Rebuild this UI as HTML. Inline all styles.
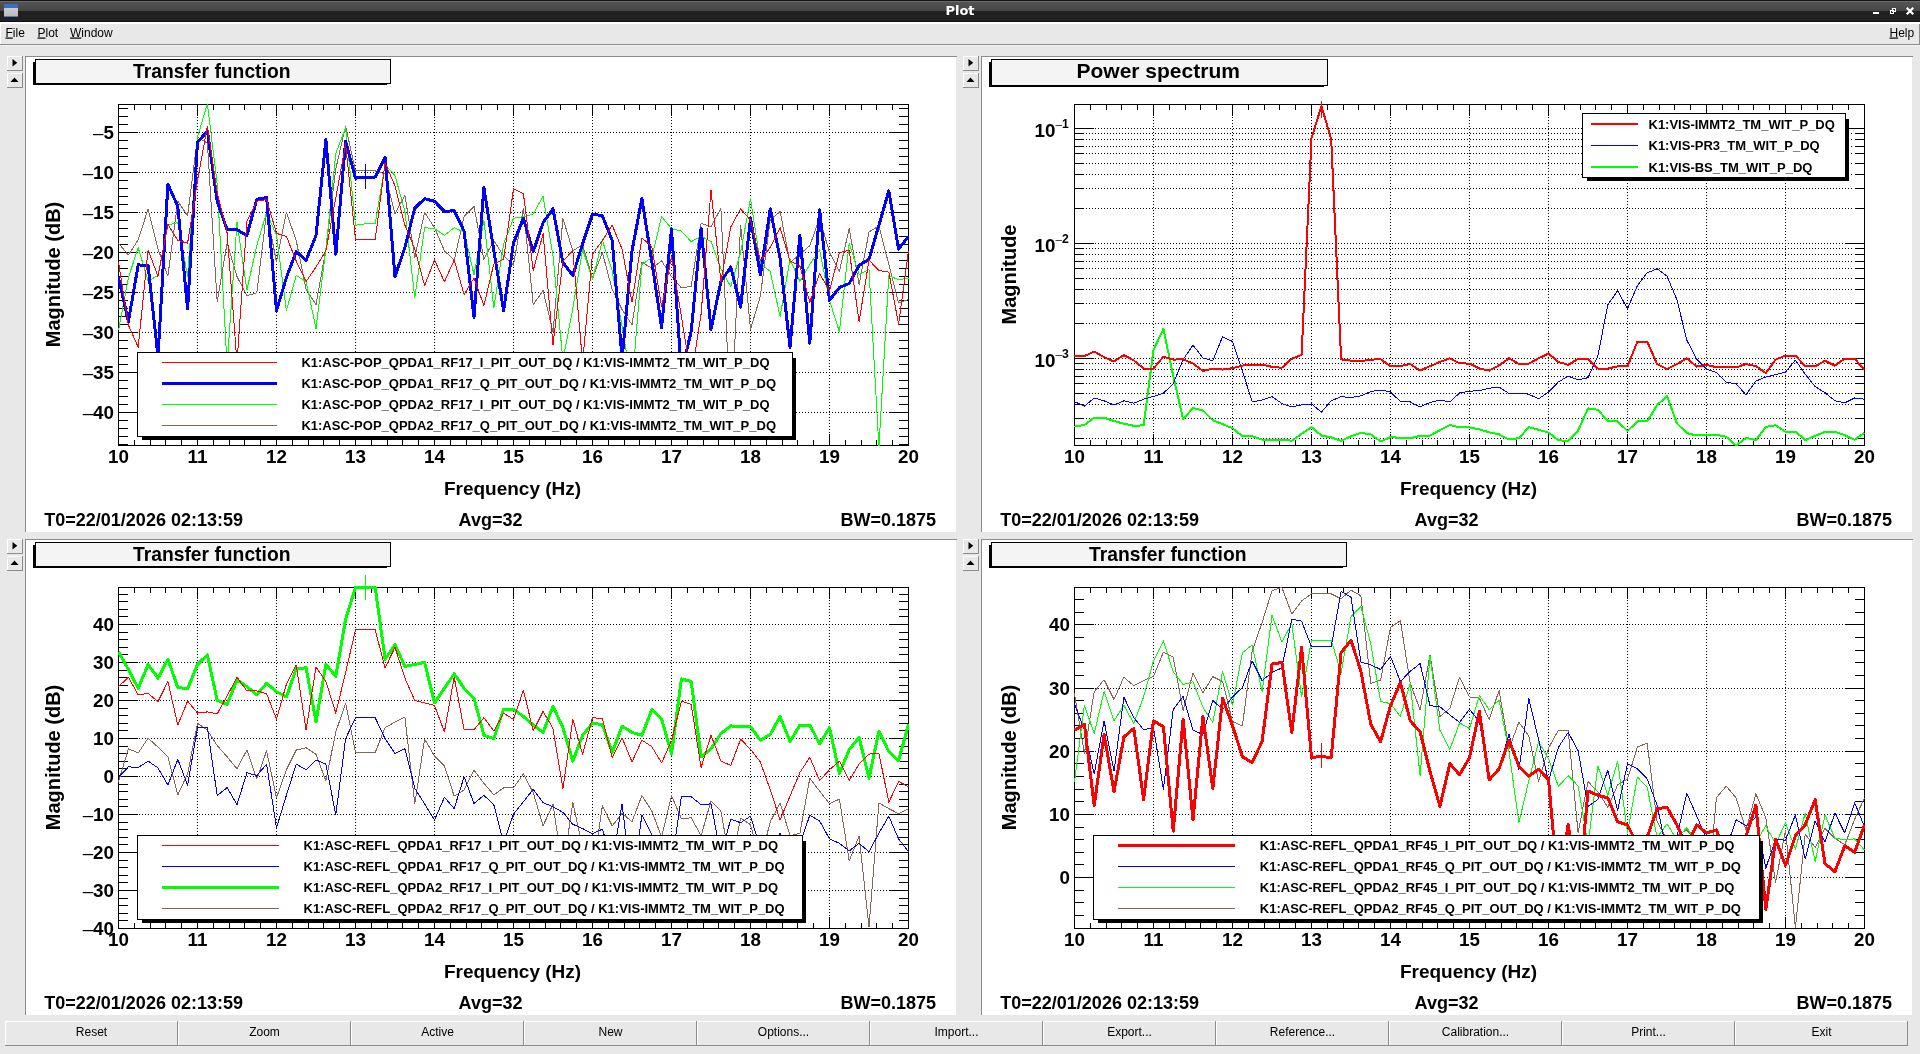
<!DOCTYPE html>
<html><head><meta charset="utf-8"><title>Plot</title><style>html,body{margin:0;padding:0;background:#e8e8e8;overflow:hidden}body{width:1920px;height:1054px}</style></head><body>
<svg width="1920" height="1054" viewBox="0 0 1920 1054" style="display:block;will-change:transform">
<defs><linearGradient id="tb" x1="0" y1="0" x2="0" y2="1"><stop offset="0" stop-color="#565656"/><stop offset="1" stop-color="#454545"/></linearGradient><linearGradient id="ic" x1="0" y1="0" x2="0" y2="1"><stop offset="0" stop-color="#d8d8d8"/><stop offset="1" stop-color="#b8b8b8"/></linearGradient></defs>
<rect width="1920" height="1054" fill="#e8e8e8"/>
<rect x="0" y="0" width="1920" height="22" fill="#212121"/>
<rect x="0" y="1" width="1920" height="10" fill="url(#tb)"/>
<rect x="0" y="0" width="1920" height="1" fill="#161616"/>
<rect x="0" y="1" width="1920" height="1" fill="#6a6a6a"/>
<rect x="0" y="21" width="1920" height="1" fill="#141414"/>
<rect x="0" y="22" width="1920" height="2" fill="#ffffff"/>
<rect x="4" y="4" width="14" height="13" fill="url(#ic)"/><rect x="4" y="4" width="14" height="4" fill="#3a6fc0"/><rect x="4" y="16" width="14" height="1" fill="#4a7fd0"/>
<text x="960" y="14.6" text-anchor="middle" font-family="'DejaVu Sans', sans-serif" font-weight="bold" font-size="13" fill="#fff">Plot</text>
<rect x="1873" y="12" width="6" height="2" fill="#fff"/>
<g fill="none" stroke="#fff" stroke-width="1"><rect x="1892.5" y="8.5" width="3" height="3"/><rect x="1890.5" y="10.5" width="3" height="3"/></g>
<path d="M1907.5 8.5 L1912.5 13.5 M1912.5 8.5 L1907.5 13.5" stroke="#fff" stroke-width="2.2" stroke-linecap="square"/>
<text x="5.5" y="36.5" font-family="'Liberation Sans', sans-serif" font-size="12" fill="#000" text-anchor="start"><tspan text-decoration="underline">F</tspan>ile</text>
<text x="37.5" y="36.5" font-family="'Liberation Sans', sans-serif" font-size="12" fill="#000" text-anchor="start"><tspan text-decoration="underline">P</tspan>lot</text>
<text x="70" y="36.5" font-family="'Liberation Sans', sans-serif" font-size="12" fill="#000" text-anchor="start"><tspan text-decoration="underline">W</tspan>indow</text>
<text x="1889.5" y="36.5" font-family="'Liberation Sans', sans-serif" font-size="12" fill="#000" text-anchor="start"><tspan text-decoration="underline">H</tspan>elp</text>
<rect x="0" y="44" width="1920" height="1" fill="#8c8c8c" />
<rect x="0" y="45" width="1920" height="1" fill="#f4f4f4" />
<rect x="1919" y="24" width="1" height="21" fill="#8c8c8c"/>
<rect x="0" y="22" width="1" height="22" fill="#ffffff"/>
<rect x="25" y="56" width="932" height="1" fill="#8c8c8c" />
<rect x="25" y="56" width="1" height="476" fill="#8c8c8c"/>
<rect x="26" y="57" width="930" height="475" fill="#fff"/>
<rect x="7" y="56" width="16" height="15" fill="#e8e8e8"/>
<rect x="7" y="56" width="16" height="1" fill="#fff" />
<rect x="7" y="56" width="1" height="15" fill="#fff"/>
<rect x="7" y="70" width="16" height="1" fill="#8c8c8c" />
<rect x="22" y="56" width="1" height="15" fill="#8c8c8c"/>
<path d="M12.5 59 L17.3 62.7 L12.5 66.5Z" fill="#000"/>
<rect x="7" y="73" width="16" height="15" fill="#e8e8e8"/>
<rect x="7" y="73" width="16" height="1" fill="#fff" />
<rect x="7" y="73" width="1" height="15" fill="#fff"/>
<rect x="7" y="87" width="16" height="1" fill="#8c8c8c" />
<rect x="22" y="73" width="1" height="15" fill="#8c8c8c"/>
<path d="M10.5 82 L14.5 77.5 L18.5 82Z" fill="#000"/>
<g shape-rendering="crispEdges"><rect x="33" y="62" width="354" height="23" fill="#000"/>
<rect x="35.5" y="59.5" width="355" height="24" fill="#f4f4f4" stroke="#000" stroke-width="1"/></g>
<text x="211.7" y="77.7" text-anchor="middle" font-family="'Liberation Sans', sans-serif" font-weight="bold" font-size="19.3" fill="#000">Transfer function</text>
<g shape-rendering="crispEdges">
<line x1="197.5" y1="117" x2="197.5" y2="433" stroke="#000" stroke-width="1" stroke-dasharray="1 2"/>
<line x1="276.5" y1="117" x2="276.5" y2="433" stroke="#000" stroke-width="1" stroke-dasharray="1 2"/>
<line x1="355.5" y1="117" x2="355.5" y2="433" stroke="#000" stroke-width="1" stroke-dasharray="1 2"/>
<line x1="434.5" y1="117" x2="434.5" y2="433" stroke="#000" stroke-width="1" stroke-dasharray="1 2"/>
<line x1="513.5" y1="117" x2="513.5" y2="433" stroke="#000" stroke-width="1" stroke-dasharray="1 2"/>
<line x1="592.5" y1="117" x2="592.5" y2="433" stroke="#000" stroke-width="1" stroke-dasharray="1 2"/>
<line x1="671.5" y1="117" x2="671.5" y2="433" stroke="#000" stroke-width="1" stroke-dasharray="1 2"/>
<line x1="750.5" y1="117" x2="750.5" y2="433" stroke="#000" stroke-width="1" stroke-dasharray="1 2"/>
<line x1="829.5" y1="117" x2="829.5" y2="433" stroke="#000" stroke-width="1" stroke-dasharray="1 2"/>
<rect x="134" y="104" width="1" height="6" fill="#000"/>
<rect x="134" y="440" width="1" height="6" fill="#000"/>
<rect x="150" y="104" width="1" height="6" fill="#000"/>
<rect x="150" y="440" width="1" height="6" fill="#000"/>
<rect x="165" y="104" width="1" height="6" fill="#000"/>
<rect x="165" y="440" width="1" height="6" fill="#000"/>
<rect x="181" y="104" width="1" height="6" fill="#000"/>
<rect x="181" y="440" width="1" height="6" fill="#000"/>
<rect x="197" y="104" width="1" height="12" fill="#000"/>
<rect x="197" y="434" width="1" height="12" fill="#000"/>
<rect x="213" y="104" width="1" height="6" fill="#000"/>
<rect x="213" y="440" width="1" height="6" fill="#000"/>
<rect x="229" y="104" width="1" height="6" fill="#000"/>
<rect x="229" y="440" width="1" height="6" fill="#000"/>
<rect x="244" y="104" width="1" height="6" fill="#000"/>
<rect x="244" y="440" width="1" height="6" fill="#000"/>
<rect x="260" y="104" width="1" height="6" fill="#000"/>
<rect x="260" y="440" width="1" height="6" fill="#000"/>
<rect x="276" y="104" width="1" height="12" fill="#000"/>
<rect x="276" y="434" width="1" height="12" fill="#000"/>
<rect x="292" y="104" width="1" height="6" fill="#000"/>
<rect x="292" y="440" width="1" height="6" fill="#000"/>
<rect x="308" y="104" width="1" height="6" fill="#000"/>
<rect x="308" y="440" width="1" height="6" fill="#000"/>
<rect x="323" y="104" width="1" height="6" fill="#000"/>
<rect x="323" y="440" width="1" height="6" fill="#000"/>
<rect x="339" y="104" width="1" height="6" fill="#000"/>
<rect x="339" y="440" width="1" height="6" fill="#000"/>
<rect x="355" y="104" width="1" height="12" fill="#000"/>
<rect x="355" y="434" width="1" height="12" fill="#000"/>
<rect x="371" y="104" width="1" height="6" fill="#000"/>
<rect x="371" y="440" width="1" height="6" fill="#000"/>
<rect x="387" y="104" width="1" height="6" fill="#000"/>
<rect x="387" y="440" width="1" height="6" fill="#000"/>
<rect x="402" y="104" width="1" height="6" fill="#000"/>
<rect x="402" y="440" width="1" height="6" fill="#000"/>
<rect x="418" y="104" width="1" height="6" fill="#000"/>
<rect x="418" y="440" width="1" height="6" fill="#000"/>
<rect x="434" y="104" width="1" height="12" fill="#000"/>
<rect x="434" y="434" width="1" height="12" fill="#000"/>
<rect x="450" y="104" width="1" height="6" fill="#000"/>
<rect x="450" y="440" width="1" height="6" fill="#000"/>
<rect x="466" y="104" width="1" height="6" fill="#000"/>
<rect x="466" y="440" width="1" height="6" fill="#000"/>
<rect x="481" y="104" width="1" height="6" fill="#000"/>
<rect x="481" y="440" width="1" height="6" fill="#000"/>
<rect x="497" y="104" width="1" height="6" fill="#000"/>
<rect x="497" y="440" width="1" height="6" fill="#000"/>
<rect x="513" y="104" width="1" height="12" fill="#000"/>
<rect x="513" y="434" width="1" height="12" fill="#000"/>
<rect x="529" y="104" width="1" height="6" fill="#000"/>
<rect x="529" y="440" width="1" height="6" fill="#000"/>
<rect x="545" y="104" width="1" height="6" fill="#000"/>
<rect x="545" y="440" width="1" height="6" fill="#000"/>
<rect x="560" y="104" width="1" height="6" fill="#000"/>
<rect x="560" y="440" width="1" height="6" fill="#000"/>
<rect x="576" y="104" width="1" height="6" fill="#000"/>
<rect x="576" y="440" width="1" height="6" fill="#000"/>
<rect x="592" y="104" width="1" height="12" fill="#000"/>
<rect x="592" y="434" width="1" height="12" fill="#000"/>
<rect x="608" y="104" width="1" height="6" fill="#000"/>
<rect x="608" y="440" width="1" height="6" fill="#000"/>
<rect x="624" y="104" width="1" height="6" fill="#000"/>
<rect x="624" y="440" width="1" height="6" fill="#000"/>
<rect x="639" y="104" width="1" height="6" fill="#000"/>
<rect x="639" y="440" width="1" height="6" fill="#000"/>
<rect x="655" y="104" width="1" height="6" fill="#000"/>
<rect x="655" y="440" width="1" height="6" fill="#000"/>
<rect x="671" y="104" width="1" height="12" fill="#000"/>
<rect x="671" y="434" width="1" height="12" fill="#000"/>
<rect x="687" y="104" width="1" height="6" fill="#000"/>
<rect x="687" y="440" width="1" height="6" fill="#000"/>
<rect x="703" y="104" width="1" height="6" fill="#000"/>
<rect x="703" y="440" width="1" height="6" fill="#000"/>
<rect x="718" y="104" width="1" height="6" fill="#000"/>
<rect x="718" y="440" width="1" height="6" fill="#000"/>
<rect x="734" y="104" width="1" height="6" fill="#000"/>
<rect x="734" y="440" width="1" height="6" fill="#000"/>
<rect x="750" y="104" width="1" height="12" fill="#000"/>
<rect x="750" y="434" width="1" height="12" fill="#000"/>
<rect x="766" y="104" width="1" height="6" fill="#000"/>
<rect x="766" y="440" width="1" height="6" fill="#000"/>
<rect x="782" y="104" width="1" height="6" fill="#000"/>
<rect x="782" y="440" width="1" height="6" fill="#000"/>
<rect x="797" y="104" width="1" height="6" fill="#000"/>
<rect x="797" y="440" width="1" height="6" fill="#000"/>
<rect x="813" y="104" width="1" height="6" fill="#000"/>
<rect x="813" y="440" width="1" height="6" fill="#000"/>
<rect x="829" y="104" width="1" height="12" fill="#000"/>
<rect x="829" y="434" width="1" height="12" fill="#000"/>
<rect x="845" y="104" width="1" height="6" fill="#000"/>
<rect x="845" y="440" width="1" height="6" fill="#000"/>
<rect x="861" y="104" width="1" height="6" fill="#000"/>
<rect x="861" y="440" width="1" height="6" fill="#000"/>
<rect x="876" y="104" width="1" height="6" fill="#000"/>
<rect x="876" y="440" width="1" height="6" fill="#000"/>
<rect x="892" y="104" width="1" height="6" fill="#000"/>
<rect x="892" y="440" width="1" height="6" fill="#000"/>
<rect x="118" y="444" width="10" height="1" fill="#000" />
<rect x="899" y="444" width="10" height="1" fill="#000" />
<rect x="118" y="436" width="10" height="1" fill="#000" />
<rect x="899" y="436" width="10" height="1" fill="#000" />
<rect x="118" y="428" width="10" height="1" fill="#000" />
<rect x="899" y="428" width="10" height="1" fill="#000" />
<rect x="118" y="420" width="10" height="1" fill="#000" />
<rect x="899" y="420" width="10" height="1" fill="#000" />
<rect x="118" y="412" width="20" height="1" fill="#000" />
<rect x="889" y="412" width="20" height="1" fill="#000" />
<line x1="139" y1="412.5" x2="888" y2="412.5" stroke="#000" stroke-width="1" stroke-dasharray="1 2"/>
</g><text x="114" y="419.2" text-anchor="end" font-family="'Liberation Sans', sans-serif" font-weight="bold" font-size="18.8" fill="#000"><tspan font-weight="normal">–</tspan>40</text><g shape-rendering="crispEdges">
<rect x="118" y="404" width="10" height="1" fill="#000" />
<rect x="899" y="404" width="10" height="1" fill="#000" />
<rect x="118" y="396" width="10" height="1" fill="#000" />
<rect x="899" y="396" width="10" height="1" fill="#000" />
<rect x="118" y="388" width="10" height="1" fill="#000" />
<rect x="899" y="388" width="10" height="1" fill="#000" />
<rect x="118" y="380" width="10" height="1" fill="#000" />
<rect x="899" y="380" width="10" height="1" fill="#000" />
<rect x="118" y="372" width="20" height="1" fill="#000" />
<rect x="889" y="372" width="20" height="1" fill="#000" />
<line x1="139" y1="372.5" x2="888" y2="372.5" stroke="#000" stroke-width="1" stroke-dasharray="1 2"/>
</g><text x="114" y="379.2" text-anchor="end" font-family="'Liberation Sans', sans-serif" font-weight="bold" font-size="18.8" fill="#000"><tspan font-weight="normal">–</tspan>35</text><g shape-rendering="crispEdges">
<rect x="118" y="364" width="10" height="1" fill="#000" />
<rect x="899" y="364" width="10" height="1" fill="#000" />
<rect x="118" y="356" width="10" height="1" fill="#000" />
<rect x="899" y="356" width="10" height="1" fill="#000" />
<rect x="118" y="348" width="10" height="1" fill="#000" />
<rect x="899" y="348" width="10" height="1" fill="#000" />
<rect x="118" y="340" width="10" height="1" fill="#000" />
<rect x="899" y="340" width="10" height="1" fill="#000" />
<rect x="118" y="332" width="20" height="1" fill="#000" />
<rect x="889" y="332" width="20" height="1" fill="#000" />
<line x1="139" y1="332.5" x2="888" y2="332.5" stroke="#000" stroke-width="1" stroke-dasharray="1 2"/>
</g><text x="114" y="339.2" text-anchor="end" font-family="'Liberation Sans', sans-serif" font-weight="bold" font-size="18.8" fill="#000"><tspan font-weight="normal">–</tspan>30</text><g shape-rendering="crispEdges">
<rect x="118" y="324" width="10" height="1" fill="#000" />
<rect x="899" y="324" width="10" height="1" fill="#000" />
<rect x="118" y="316" width="10" height="1" fill="#000" />
<rect x="899" y="316" width="10" height="1" fill="#000" />
<rect x="118" y="308" width="10" height="1" fill="#000" />
<rect x="899" y="308" width="10" height="1" fill="#000" />
<rect x="118" y="300" width="10" height="1" fill="#000" />
<rect x="899" y="300" width="10" height="1" fill="#000" />
<rect x="118" y="292" width="20" height="1" fill="#000" />
<rect x="889" y="292" width="20" height="1" fill="#000" />
<line x1="139" y1="292.5" x2="888" y2="292.5" stroke="#000" stroke-width="1" stroke-dasharray="1 2"/>
</g><text x="114" y="299.2" text-anchor="end" font-family="'Liberation Sans', sans-serif" font-weight="bold" font-size="18.8" fill="#000"><tspan font-weight="normal">–</tspan>25</text><g shape-rendering="crispEdges">
<rect x="118" y="284" width="10" height="1" fill="#000" />
<rect x="899" y="284" width="10" height="1" fill="#000" />
<rect x="118" y="276" width="10" height="1" fill="#000" />
<rect x="899" y="276" width="10" height="1" fill="#000" />
<rect x="118" y="268" width="10" height="1" fill="#000" />
<rect x="899" y="268" width="10" height="1" fill="#000" />
<rect x="118" y="260" width="10" height="1" fill="#000" />
<rect x="899" y="260" width="10" height="1" fill="#000" />
<rect x="118" y="252" width="20" height="1" fill="#000" />
<rect x="889" y="252" width="20" height="1" fill="#000" />
<line x1="139" y1="252.5" x2="888" y2="252.5" stroke="#000" stroke-width="1" stroke-dasharray="1 2"/>
</g><text x="114" y="259.2" text-anchor="end" font-family="'Liberation Sans', sans-serif" font-weight="bold" font-size="18.8" fill="#000"><tspan font-weight="normal">–</tspan>20</text><g shape-rendering="crispEdges">
<rect x="118" y="244" width="10" height="1" fill="#000" />
<rect x="899" y="244" width="10" height="1" fill="#000" />
<rect x="118" y="236" width="10" height="1" fill="#000" />
<rect x="899" y="236" width="10" height="1" fill="#000" />
<rect x="118" y="228" width="10" height="1" fill="#000" />
<rect x="899" y="228" width="10" height="1" fill="#000" />
<rect x="118" y="220" width="10" height="1" fill="#000" />
<rect x="899" y="220" width="10" height="1" fill="#000" />
<rect x="118" y="212" width="20" height="1" fill="#000" />
<rect x="889" y="212" width="20" height="1" fill="#000" />
<line x1="139" y1="212.5" x2="888" y2="212.5" stroke="#000" stroke-width="1" stroke-dasharray="1 2"/>
</g><text x="114" y="219.2" text-anchor="end" font-family="'Liberation Sans', sans-serif" font-weight="bold" font-size="18.8" fill="#000"><tspan font-weight="normal">–</tspan>15</text><g shape-rendering="crispEdges">
<rect x="118" y="204" width="10" height="1" fill="#000" />
<rect x="899" y="204" width="10" height="1" fill="#000" />
<rect x="118" y="196" width="10" height="1" fill="#000" />
<rect x="899" y="196" width="10" height="1" fill="#000" />
<rect x="118" y="188" width="10" height="1" fill="#000" />
<rect x="899" y="188" width="10" height="1" fill="#000" />
<rect x="118" y="180" width="10" height="1" fill="#000" />
<rect x="899" y="180" width="10" height="1" fill="#000" />
<rect x="118" y="172" width="20" height="1" fill="#000" />
<rect x="889" y="172" width="20" height="1" fill="#000" />
<line x1="139" y1="172.5" x2="888" y2="172.5" stroke="#000" stroke-width="1" stroke-dasharray="1 2"/>
</g><text x="114" y="179.2" text-anchor="end" font-family="'Liberation Sans', sans-serif" font-weight="bold" font-size="18.8" fill="#000"><tspan font-weight="normal">–</tspan>10</text><g shape-rendering="crispEdges">
<rect x="118" y="164" width="10" height="1" fill="#000" />
<rect x="899" y="164" width="10" height="1" fill="#000" />
<rect x="118" y="156" width="10" height="1" fill="#000" />
<rect x="899" y="156" width="10" height="1" fill="#000" />
<rect x="118" y="148" width="10" height="1" fill="#000" />
<rect x="899" y="148" width="10" height="1" fill="#000" />
<rect x="118" y="140" width="10" height="1" fill="#000" />
<rect x="899" y="140" width="10" height="1" fill="#000" />
<rect x="118" y="132" width="20" height="1" fill="#000" />
<rect x="889" y="132" width="20" height="1" fill="#000" />
<line x1="139" y1="132.5" x2="888" y2="132.5" stroke="#000" stroke-width="1" stroke-dasharray="1 2"/>
</g><text x="114" y="139.2" text-anchor="end" font-family="'Liberation Sans', sans-serif" font-weight="bold" font-size="18.8" fill="#000"><tspan font-weight="normal">–</tspan>5</text><g shape-rendering="crispEdges">
<rect x="118" y="124" width="10" height="1" fill="#000" />
<rect x="899" y="124" width="10" height="1" fill="#000" />
<rect x="118" y="116" width="10" height="1" fill="#000" />
<rect x="899" y="116" width="10" height="1" fill="#000" />
<rect x="118" y="108" width="10" height="1" fill="#000" />
<rect x="899" y="108" width="10" height="1" fill="#000" />
</g>
<g shape-rendering="crispEdges">
<rect x="118" y="104" width="791" height="1" fill="#000" />
<rect x="118" y="445" width="791" height="1" fill="#000" />
<rect x="118" y="104" width="1" height="342" fill="#000"/>
<rect x="908" y="104" width="1" height="342" fill="#000"/>
</g>
<clipPath id="cp0"><rect x="118" y="104" width="791" height="342"/></clipPath>
<g clip-path="url(#cp0)" shape-rendering="crispEdges" fill="none" stroke-linejoin="round">
<polyline points="118.5,243.1 128.4,255.0 138.2,239.7 148.1,208.9 158.0,249.1 167.9,276.0 177.8,201.3 187.6,215.8 197.5,137.2 207.4,143.2 217.2,302.1 227.1,243.1 237.0,276.5 246.9,295.8 256.8,292.7 266.6,212.4 276.5,261.9 286.4,212.4 296.2,240.5 306.1,289.3 316.0,304.7 325.9,249.1 335.8,168.8 345.6,126.1 355.5,170.9 365.4,170.9 375.2,170.9 385.1,173.9 395.0,213.7 404.9,195.1 414.8,257.6 424.6,212.4 434.5,227.7 444.4,250.8 454.2,260.2 464.1,216.6 474.0,206.4 483.9,259.3 493.8,240.5 503.6,255.9 513.5,265.0 523.4,208.1 533.2,304.7 543.1,290.5 553.0,332.2 562.9,218.3 572.8,250.8 582.6,244.8 592.5,278.1 602.4,252.5 612.2,289.7 622.1,309.7 632.0,324.7 641.9,262.0 651.8,268.3 661.6,261.0 671.5,276.5 681.4,287.8 691.2,286.5 701.1,223.4 711.0,226.9 720.9,208.1 730.8,424.5 740.6,225.2 750.5,329.4 760.4,296.1 770.2,220.0 780.1,211.5 790.0,262.7 799.9,254.2 809.8,245.7 819.6,218.3 829.5,252.5 839.4,271.3 849.2,228.6 859.1,284.5 869.0,232.0 878.9,226.0 888.8,264.4 898.6,302.9 908.5,299.5" stroke="#87665a" stroke-width="1"/>
<polyline points="118.5,330.5 128.4,277.5 138.2,247.7 148.1,281.0 158.0,275.5 167.9,225.2 177.8,222.6 187.6,276.5 197.5,137.2 207.4,103.5 217.2,184.2 227.1,365.5 237.0,222.1 246.9,290.1 256.8,245.5 266.6,212.4 276.5,235.4 286.4,310.6 296.2,275.5 306.1,281.5 316.0,328.6 325.9,249.1 335.8,153.4 345.6,127.8 355.5,225.2 365.4,223.8 375.2,223.8 385.1,164.5 395.0,175.6 404.9,211.5 414.8,297.9 424.6,227.7 434.5,228.6 444.4,235.4 454.2,227.7 464.1,232.0 474.0,274.7 483.9,220.0 493.8,308.0 503.6,243.9 513.5,218.3 523.4,216.6 533.2,214.1 543.1,196.1 553.0,255.5 562.9,360.5 572.8,308.5 582.6,249.1 592.5,279.5 602.4,240.5 612.2,271.0 622.1,326.5 632.0,385.5 641.9,264.4 651.8,257.6 661.6,216.6 671.5,228.6 681.4,231.1 691.2,241.7 701.1,236.3 711.0,241.4 720.9,268.7 730.8,286.7 740.6,252.5 750.5,198.7 760.4,263.6 770.2,271.3 780.1,316.6 790.0,259.3 799.9,281.5 809.8,264.4 819.6,249.9 829.5,300.4 839.4,332.0 849.2,243.1 859.1,274.7 869.0,269.6 878.9,447.5 888.8,275.5 898.6,279.8 908.5,278.1" stroke="#00ff00" stroke-width="1"/>
<polyline points="118.5,277.5 128.4,321.5 138.2,264.8 148.1,265.8 158.0,356.5 167.9,184.2 177.8,206.4 187.6,308.9 197.5,142.3 207.4,130.9 217.2,201.3 227.1,229.8 237.0,229.8 246.9,235.4 256.8,199.2 266.6,197.5 276.5,310.5 286.4,277.5 296.2,251.6 306.1,260.2 316.0,235.4 325.9,139.8 335.8,254.2 345.6,141.5 355.5,178.2 365.4,177.0 375.2,177.0 385.1,157.7 395.0,276.5 404.9,247.4 414.8,208.1 424.6,198.7 434.5,201.3 444.4,211.5 454.2,210.6 464.1,231.1 474.0,317.2 483.9,187.6 493.8,250.5 503.6,310.5 513.5,243.1 523.4,218.3 533.2,251.6 543.1,222.6 553.0,208.9 562.9,262.5 572.8,275.5 582.6,243.9 592.5,214.1 602.4,215.8 612.2,240.5 622.1,358.5 632.0,250.8 641.9,198.7 651.8,261.5 661.6,327.5 671.5,229.0 681.4,372.5 691.2,331.5 701.1,228.5 711.0,329.4 720.9,281.5 730.8,267.0 740.6,307.2 750.5,218.3 760.4,275.0 770.2,208.9 780.1,258.5 790.0,347.3 799.9,235.4 809.8,343.1 819.6,209.8 829.5,300.4 839.4,287.6 849.2,283.5 859.1,265.3 869.0,259.3 878.9,225.2 888.8,191.0 898.6,249.1 908.5,236.3" stroke="#0000ff" stroke-width="3"/>
<polyline points="118.5,262.0 128.4,325.1 138.2,347.3 148.1,249.9 158.0,276.4 167.9,224.3 177.8,240.5 187.6,243.1 197.5,180.8 207.4,126.1 217.2,192.7 227.1,232.8 237.0,362.5 246.9,220.9 256.8,201.3 266.6,199.5 276.5,233.4 286.4,236.3 296.2,261.0 306.1,281.5 316.0,267.0 325.9,250.8 335.8,197.8 345.6,144.0 355.5,239.7 365.4,239.7 375.2,239.7 385.1,162.8 395.0,185.9 404.9,225.2 414.8,249.1 424.6,285.5 434.5,260.0 444.4,281.8 454.2,260.0 464.1,294.7 474.0,278.0 483.9,305.5 493.8,264.0 503.6,259.3 513.5,189.0 523.4,193.6 533.2,270.5 543.1,233.7 553.0,344.7 562.9,261.0 572.8,250.8 582.6,362.5 592.5,254.2 602.4,240.5 612.2,225.2 622.1,249.1 632.0,302.2 641.9,238.0 651.8,246.5 661.6,306.8 671.5,257.0 681.4,316.5 691.2,377.5 701.1,313.9 711.0,190.2 720.9,281.5 730.8,226.9 740.6,208.9 750.5,220.0 760.4,261.0 770.2,247.4 780.1,227.7 790.0,261.0 799.9,266.1 809.8,302.1 819.6,273.5 829.5,291.0 839.4,252.5 849.2,250.4 859.1,321.7 869.0,260.2 878.9,270.4 888.8,272.1 898.6,324.3 908.5,250.8" stroke="#ff0000" stroke-width="1"/>
</g>
<rect x="365" y="164" width="1" height="25" fill="#0000ff" shape-rendering="crispEdges"/>
<text x="118.5" y="463.2" text-anchor="middle" font-family="'Liberation Sans', sans-serif" font-weight="bold" font-size="18.8" fill="#000">10</text>
<text x="197.5" y="463.2" text-anchor="middle" font-family="'Liberation Sans', sans-serif" font-weight="bold" font-size="18.8" fill="#000">11</text>
<text x="276.5" y="463.2" text-anchor="middle" font-family="'Liberation Sans', sans-serif" font-weight="bold" font-size="18.8" fill="#000">12</text>
<text x="355.5" y="463.2" text-anchor="middle" font-family="'Liberation Sans', sans-serif" font-weight="bold" font-size="18.8" fill="#000">13</text>
<text x="434.5" y="463.2" text-anchor="middle" font-family="'Liberation Sans', sans-serif" font-weight="bold" font-size="18.8" fill="#000">14</text>
<text x="513.5" y="463.2" text-anchor="middle" font-family="'Liberation Sans', sans-serif" font-weight="bold" font-size="18.8" fill="#000">15</text>
<text x="592.5" y="463.2" text-anchor="middle" font-family="'Liberation Sans', sans-serif" font-weight="bold" font-size="18.8" fill="#000">16</text>
<text x="671.5" y="463.2" text-anchor="middle" font-family="'Liberation Sans', sans-serif" font-weight="bold" font-size="18.8" fill="#000">17</text>
<text x="750.5" y="463.2" text-anchor="middle" font-family="'Liberation Sans', sans-serif" font-weight="bold" font-size="18.8" fill="#000">18</text>
<text x="829.5" y="463.2" text-anchor="middle" font-family="'Liberation Sans', sans-serif" font-weight="bold" font-size="18.8" fill="#000">19</text>
<text x="908.5" y="463.2" text-anchor="middle" font-family="'Liberation Sans', sans-serif" font-weight="bold" font-size="18.8" fill="#000">20</text>
<text x="512.5" y="495" text-anchor="middle" font-family="'Liberation Sans', sans-serif" font-weight="bold" font-size="19" fill="#000">Frequency (Hz)</text>
<text transform="translate(60,274.5) rotate(-90)" text-anchor="middle" font-family="'Liberation Sans', sans-serif" font-weight="bold" font-size="20" fill="#000">Magnitude (dB)</text>
<text x="44.3" y="525.5" font-family="'Liberation Sans', sans-serif" font-weight="bold" font-size="18" fill="#000">T0=22/01/2026 02:13:59</text>
<text x="490.5" y="525.5" text-anchor="middle" font-family="'Liberation Sans', sans-serif" font-weight="bold" font-size="18" fill="#000">Avg=32</text>
<text x="936" y="525.5" text-anchor="end" font-family="'Liberation Sans', sans-serif" font-weight="bold" font-size="18" fill="#000">BW=0.1875</text>
<g shape-rendering="crispEdges">
<rect x="142" y="358" width="654" height="82" fill="#000"/>
<rect x="137.5" y="352.5" width="655" height="84" fill="#fff" stroke="#000"/>
<rect x="162" y="362" width="115" height="1" fill="#ff0000"/>
<rect x="162" y="382" width="115" height="3" fill="#0000ff"/>
<rect x="162" y="404" width="115" height="1" fill="#00ff00"/>
<rect x="162" y="425" width="115" height="1" fill="#87665a"/>
</g>
<text x="301.4" y="366.6" font-family="'Liberation Sans', sans-serif" font-weight="bold" font-size="13" fill="#000">K1:ASC-POP_QPDA1_RF17_I_PIT_OUT_DQ / K1:VIS-IMMT2_TM_WIT_P_DQ</text>
<text x="301.4" y="387.6" font-family="'Liberation Sans', sans-serif" font-weight="bold" font-size="13" fill="#000">K1:ASC-POP_QPDA1_RF17_Q_PIT_OUT_DQ / K1:VIS-IMMT2_TM_WIT_P_DQ</text>
<text x="301.4" y="408.6" font-family="'Liberation Sans', sans-serif" font-weight="bold" font-size="13" fill="#000">K1:ASC-POP_QPDA2_RF17_I_PIT_OUT_DQ / K1:VIS-IMMT2_TM_WIT_P_DQ</text>
<text x="301.4" y="429.6" font-family="'Liberation Sans', sans-serif" font-weight="bold" font-size="13" fill="#000">K1:ASC-POP_QPDA2_RF17_Q_PIT_OUT_DQ / K1:VIS-IMMT2_TM_WIT_P_DQ</text>
<rect x="981" y="56" width="932" height="1" fill="#8c8c8c" />
<rect x="981" y="56" width="1" height="476" fill="#8c8c8c"/>
<rect x="982" y="57" width="930" height="475" fill="#fff"/>
<rect x="963" y="56" width="16" height="15" fill="#e8e8e8"/>
<rect x="963" y="56" width="16" height="1" fill="#fff" />
<rect x="963" y="56" width="1" height="15" fill="#fff"/>
<rect x="963" y="70" width="16" height="1" fill="#8c8c8c" />
<rect x="978" y="56" width="1" height="15" fill="#8c8c8c"/>
<path d="M968.5 59 L973.3 62.7 L968.5 66.5Z" fill="#000"/>
<rect x="963" y="73" width="16" height="15" fill="#e8e8e8"/>
<rect x="963" y="73" width="16" height="1" fill="#fff" />
<rect x="963" y="73" width="1" height="15" fill="#fff"/>
<rect x="963" y="87" width="16" height="1" fill="#8c8c8c" />
<rect x="978" y="73" width="1" height="15" fill="#8c8c8c"/>
<path d="M966.5 82 L970.5 77.5 L974.5 82Z" fill="#000"/>
<g shape-rendering="crispEdges"><rect x="989" y="62" width="335" height="25" fill="#000"/>
<rect x="991.5" y="59.5" width="336" height="26" fill="#f4f4f4" stroke="#000" stroke-width="1"/></g>
<text x="1158.2" y="77.7" text-anchor="middle" font-family="'Liberation Sans', sans-serif" font-weight="bold" font-size="21" fill="#000">Power spectrum</text>
<g shape-rendering="crispEdges">
<line x1="1153.5" y1="117" x2="1153.5" y2="433" stroke="#000" stroke-width="1" stroke-dasharray="1 2"/>
<line x1="1232.5" y1="117" x2="1232.5" y2="433" stroke="#000" stroke-width="1" stroke-dasharray="1 2"/>
<line x1="1311.5" y1="117" x2="1311.5" y2="433" stroke="#000" stroke-width="1" stroke-dasharray="1 2"/>
<line x1="1390.5" y1="117" x2="1390.5" y2="433" stroke="#000" stroke-width="1" stroke-dasharray="1 2"/>
<line x1="1469.5" y1="117" x2="1469.5" y2="433" stroke="#000" stroke-width="1" stroke-dasharray="1 2"/>
<line x1="1548.5" y1="117" x2="1548.5" y2="433" stroke="#000" stroke-width="1" stroke-dasharray="1 2"/>
<line x1="1627.5" y1="117" x2="1627.5" y2="433" stroke="#000" stroke-width="1" stroke-dasharray="1 2"/>
<line x1="1706.5" y1="117" x2="1706.5" y2="433" stroke="#000" stroke-width="1" stroke-dasharray="1 2"/>
<line x1="1785.5" y1="117" x2="1785.5" y2="433" stroke="#000" stroke-width="1" stroke-dasharray="1 2"/>
<rect x="1090" y="104" width="1" height="6" fill="#000"/>
<rect x="1090" y="440" width="1" height="6" fill="#000"/>
<rect x="1106" y="104" width="1" height="6" fill="#000"/>
<rect x="1106" y="440" width="1" height="6" fill="#000"/>
<rect x="1121" y="104" width="1" height="6" fill="#000"/>
<rect x="1121" y="440" width="1" height="6" fill="#000"/>
<rect x="1137" y="104" width="1" height="6" fill="#000"/>
<rect x="1137" y="440" width="1" height="6" fill="#000"/>
<rect x="1153" y="104" width="1" height="12" fill="#000"/>
<rect x="1153" y="434" width="1" height="12" fill="#000"/>
<rect x="1169" y="104" width="1" height="6" fill="#000"/>
<rect x="1169" y="440" width="1" height="6" fill="#000"/>
<rect x="1185" y="104" width="1" height="6" fill="#000"/>
<rect x="1185" y="440" width="1" height="6" fill="#000"/>
<rect x="1200" y="104" width="1" height="6" fill="#000"/>
<rect x="1200" y="440" width="1" height="6" fill="#000"/>
<rect x="1216" y="104" width="1" height="6" fill="#000"/>
<rect x="1216" y="440" width="1" height="6" fill="#000"/>
<rect x="1232" y="104" width="1" height="12" fill="#000"/>
<rect x="1232" y="434" width="1" height="12" fill="#000"/>
<rect x="1248" y="104" width="1" height="6" fill="#000"/>
<rect x="1248" y="440" width="1" height="6" fill="#000"/>
<rect x="1264" y="104" width="1" height="6" fill="#000"/>
<rect x="1264" y="440" width="1" height="6" fill="#000"/>
<rect x="1279" y="104" width="1" height="6" fill="#000"/>
<rect x="1279" y="440" width="1" height="6" fill="#000"/>
<rect x="1295" y="104" width="1" height="6" fill="#000"/>
<rect x="1295" y="440" width="1" height="6" fill="#000"/>
<rect x="1311" y="104" width="1" height="12" fill="#000"/>
<rect x="1311" y="434" width="1" height="12" fill="#000"/>
<rect x="1327" y="104" width="1" height="6" fill="#000"/>
<rect x="1327" y="440" width="1" height="6" fill="#000"/>
<rect x="1343" y="104" width="1" height="6" fill="#000"/>
<rect x="1343" y="440" width="1" height="6" fill="#000"/>
<rect x="1358" y="104" width="1" height="6" fill="#000"/>
<rect x="1358" y="440" width="1" height="6" fill="#000"/>
<rect x="1374" y="104" width="1" height="6" fill="#000"/>
<rect x="1374" y="440" width="1" height="6" fill="#000"/>
<rect x="1390" y="104" width="1" height="12" fill="#000"/>
<rect x="1390" y="434" width="1" height="12" fill="#000"/>
<rect x="1406" y="104" width="1" height="6" fill="#000"/>
<rect x="1406" y="440" width="1" height="6" fill="#000"/>
<rect x="1422" y="104" width="1" height="6" fill="#000"/>
<rect x="1422" y="440" width="1" height="6" fill="#000"/>
<rect x="1437" y="104" width="1" height="6" fill="#000"/>
<rect x="1437" y="440" width="1" height="6" fill="#000"/>
<rect x="1453" y="104" width="1" height="6" fill="#000"/>
<rect x="1453" y="440" width="1" height="6" fill="#000"/>
<rect x="1469" y="104" width="1" height="12" fill="#000"/>
<rect x="1469" y="434" width="1" height="12" fill="#000"/>
<rect x="1485" y="104" width="1" height="6" fill="#000"/>
<rect x="1485" y="440" width="1" height="6" fill="#000"/>
<rect x="1501" y="104" width="1" height="6" fill="#000"/>
<rect x="1501" y="440" width="1" height="6" fill="#000"/>
<rect x="1516" y="104" width="1" height="6" fill="#000"/>
<rect x="1516" y="440" width="1" height="6" fill="#000"/>
<rect x="1532" y="104" width="1" height="6" fill="#000"/>
<rect x="1532" y="440" width="1" height="6" fill="#000"/>
<rect x="1548" y="104" width="1" height="12" fill="#000"/>
<rect x="1548" y="434" width="1" height="12" fill="#000"/>
<rect x="1564" y="104" width="1" height="6" fill="#000"/>
<rect x="1564" y="440" width="1" height="6" fill="#000"/>
<rect x="1580" y="104" width="1" height="6" fill="#000"/>
<rect x="1580" y="440" width="1" height="6" fill="#000"/>
<rect x="1595" y="104" width="1" height="6" fill="#000"/>
<rect x="1595" y="440" width="1" height="6" fill="#000"/>
<rect x="1611" y="104" width="1" height="6" fill="#000"/>
<rect x="1611" y="440" width="1" height="6" fill="#000"/>
<rect x="1627" y="104" width="1" height="12" fill="#000"/>
<rect x="1627" y="434" width="1" height="12" fill="#000"/>
<rect x="1643" y="104" width="1" height="6" fill="#000"/>
<rect x="1643" y="440" width="1" height="6" fill="#000"/>
<rect x="1659" y="104" width="1" height="6" fill="#000"/>
<rect x="1659" y="440" width="1" height="6" fill="#000"/>
<rect x="1674" y="104" width="1" height="6" fill="#000"/>
<rect x="1674" y="440" width="1" height="6" fill="#000"/>
<rect x="1690" y="104" width="1" height="6" fill="#000"/>
<rect x="1690" y="440" width="1" height="6" fill="#000"/>
<rect x="1706" y="104" width="1" height="12" fill="#000"/>
<rect x="1706" y="434" width="1" height="12" fill="#000"/>
<rect x="1722" y="104" width="1" height="6" fill="#000"/>
<rect x="1722" y="440" width="1" height="6" fill="#000"/>
<rect x="1738" y="104" width="1" height="6" fill="#000"/>
<rect x="1738" y="440" width="1" height="6" fill="#000"/>
<rect x="1753" y="104" width="1" height="6" fill="#000"/>
<rect x="1753" y="440" width="1" height="6" fill="#000"/>
<rect x="1769" y="104" width="1" height="6" fill="#000"/>
<rect x="1769" y="440" width="1" height="6" fill="#000"/>
<rect x="1785" y="104" width="1" height="12" fill="#000"/>
<rect x="1785" y="434" width="1" height="12" fill="#000"/>
<rect x="1801" y="104" width="1" height="6" fill="#000"/>
<rect x="1801" y="440" width="1" height="6" fill="#000"/>
<rect x="1817" y="104" width="1" height="6" fill="#000"/>
<rect x="1817" y="440" width="1" height="6" fill="#000"/>
<rect x="1832" y="104" width="1" height="6" fill="#000"/>
<rect x="1832" y="440" width="1" height="6" fill="#000"/>
<rect x="1848" y="104" width="1" height="6" fill="#000"/>
<rect x="1848" y="440" width="1" height="6" fill="#000"/>
<rect x="1074" y="438" width="10" height="1" fill="#000" />
<rect x="1855" y="438" width="10" height="1" fill="#000" />
<line x1="1086" y1="438.5" x2="1854" y2="438.5" stroke="#000" stroke-width="1" stroke-dasharray="1 2"/>
<rect x="1074" y="418" width="10" height="1" fill="#000" />
<rect x="1855" y="418" width="10" height="1" fill="#000" />
<line x1="1086" y1="418.5" x2="1854" y2="418.5" stroke="#000" stroke-width="1" stroke-dasharray="1 2"/>
<rect x="1074" y="404" width="10" height="1" fill="#000" />
<rect x="1855" y="404" width="10" height="1" fill="#000" />
<line x1="1086" y1="404.5" x2="1854" y2="404.5" stroke="#000" stroke-width="1" stroke-dasharray="1 2"/>
<rect x="1074" y="393" width="10" height="1" fill="#000" />
<rect x="1855" y="393" width="10" height="1" fill="#000" />
<line x1="1086" y1="393.5" x2="1854" y2="393.5" stroke="#000" stroke-width="1" stroke-dasharray="1 2"/>
<rect x="1074" y="383" width="10" height="1" fill="#000" />
<rect x="1855" y="383" width="10" height="1" fill="#000" />
<line x1="1086" y1="383.5" x2="1854" y2="383.5" stroke="#000" stroke-width="1" stroke-dasharray="1 2"/>
<rect x="1074" y="376" width="10" height="1" fill="#000" />
<rect x="1855" y="376" width="10" height="1" fill="#000" />
<line x1="1086" y1="376.5" x2="1854" y2="376.5" stroke="#000" stroke-width="1" stroke-dasharray="1 2"/>
<rect x="1074" y="369" width="10" height="1" fill="#000" />
<rect x="1855" y="369" width="10" height="1" fill="#000" />
<line x1="1086" y1="369.5" x2="1854" y2="369.5" stroke="#000" stroke-width="1" stroke-dasharray="1 2"/>
<rect x="1074" y="363" width="10" height="1" fill="#000" />
<rect x="1855" y="363" width="10" height="1" fill="#000" />
<line x1="1086" y1="363.5" x2="1854" y2="363.5" stroke="#000" stroke-width="1" stroke-dasharray="1 2"/>
<rect x="1074" y="358" width="20" height="1" fill="#000" />
<rect x="1845" y="358" width="20" height="1" fill="#000" />
<line x1="1095" y1="358.5" x2="1844" y2="358.5" stroke="#000" stroke-width="1" stroke-dasharray="1 2"/>
</g><text x="1055.4" y="367.1" text-anchor="end" font-family="'Liberation Sans', sans-serif" font-weight="bold" font-size="18.8" fill="#000">10</text><text x="1068.7" y="358" text-anchor="end" font-family="'Liberation Sans', sans-serif" font-weight="bold" font-size="12.2" fill="#000"><tspan font-weight="normal" font-size="11.5">–</tspan>3</text><g shape-rendering="crispEdges">
<rect x="1074" y="323" width="10" height="1" fill="#000" />
<rect x="1855" y="323" width="10" height="1" fill="#000" />
<line x1="1086" y1="323.5" x2="1854" y2="323.5" stroke="#000" stroke-width="1" stroke-dasharray="1 2"/>
<rect x="1074" y="303" width="10" height="1" fill="#000" />
<rect x="1855" y="303" width="10" height="1" fill="#000" />
<line x1="1086" y1="303.5" x2="1854" y2="303.5" stroke="#000" stroke-width="1" stroke-dasharray="1 2"/>
<rect x="1074" y="289" width="10" height="1" fill="#000" />
<rect x="1855" y="289" width="10" height="1" fill="#000" />
<line x1="1086" y1="289.5" x2="1854" y2="289.5" stroke="#000" stroke-width="1" stroke-dasharray="1 2"/>
<rect x="1074" y="278" width="10" height="1" fill="#000" />
<rect x="1855" y="278" width="10" height="1" fill="#000" />
<line x1="1086" y1="278.5" x2="1854" y2="278.5" stroke="#000" stroke-width="1" stroke-dasharray="1 2"/>
<rect x="1074" y="268" width="10" height="1" fill="#000" />
<rect x="1855" y="268" width="10" height="1" fill="#000" />
<line x1="1086" y1="268.5" x2="1854" y2="268.5" stroke="#000" stroke-width="1" stroke-dasharray="1 2"/>
<rect x="1074" y="261" width="10" height="1" fill="#000" />
<rect x="1855" y="261" width="10" height="1" fill="#000" />
<line x1="1086" y1="261.5" x2="1854" y2="261.5" stroke="#000" stroke-width="1" stroke-dasharray="1 2"/>
<rect x="1074" y="254" width="10" height="1" fill="#000" />
<rect x="1855" y="254" width="10" height="1" fill="#000" />
<line x1="1086" y1="254.5" x2="1854" y2="254.5" stroke="#000" stroke-width="1" stroke-dasharray="1 2"/>
<rect x="1074" y="248" width="10" height="1" fill="#000" />
<rect x="1855" y="248" width="10" height="1" fill="#000" />
<line x1="1086" y1="248.5" x2="1854" y2="248.5" stroke="#000" stroke-width="1" stroke-dasharray="1 2"/>
<rect x="1074" y="243" width="20" height="1" fill="#000" />
<rect x="1845" y="243" width="20" height="1" fill="#000" />
<line x1="1095" y1="243.5" x2="1844" y2="243.5" stroke="#000" stroke-width="1" stroke-dasharray="1 2"/>
</g><text x="1055.4" y="252.1" text-anchor="end" font-family="'Liberation Sans', sans-serif" font-weight="bold" font-size="18.8" fill="#000">10</text><text x="1068.7" y="243" text-anchor="end" font-family="'Liberation Sans', sans-serif" font-weight="bold" font-size="12.2" fill="#000"><tspan font-weight="normal" font-size="11.5">–</tspan>2</text><g shape-rendering="crispEdges">
<rect x="1074" y="208" width="10" height="1" fill="#000" />
<rect x="1855" y="208" width="10" height="1" fill="#000" />
<line x1="1086" y1="208.5" x2="1854" y2="208.5" stroke="#000" stroke-width="1" stroke-dasharray="1 2"/>
<rect x="1074" y="188" width="10" height="1" fill="#000" />
<rect x="1855" y="188" width="10" height="1" fill="#000" />
<line x1="1086" y1="188.5" x2="1854" y2="188.5" stroke="#000" stroke-width="1" stroke-dasharray="1 2"/>
<rect x="1074" y="174" width="10" height="1" fill="#000" />
<rect x="1855" y="174" width="10" height="1" fill="#000" />
<line x1="1086" y1="174.5" x2="1854" y2="174.5" stroke="#000" stroke-width="1" stroke-dasharray="1 2"/>
<rect x="1074" y="163" width="10" height="1" fill="#000" />
<rect x="1855" y="163" width="10" height="1" fill="#000" />
<line x1="1086" y1="163.5" x2="1854" y2="163.5" stroke="#000" stroke-width="1" stroke-dasharray="1 2"/>
<rect x="1074" y="153" width="10" height="1" fill="#000" />
<rect x="1855" y="153" width="10" height="1" fill="#000" />
<line x1="1086" y1="153.5" x2="1854" y2="153.5" stroke="#000" stroke-width="1" stroke-dasharray="1 2"/>
<rect x="1074" y="146" width="10" height="1" fill="#000" />
<rect x="1855" y="146" width="10" height="1" fill="#000" />
<line x1="1086" y1="146.5" x2="1854" y2="146.5" stroke="#000" stroke-width="1" stroke-dasharray="1 2"/>
<rect x="1074" y="139" width="10" height="1" fill="#000" />
<rect x="1855" y="139" width="10" height="1" fill="#000" />
<line x1="1086" y1="139.5" x2="1854" y2="139.5" stroke="#000" stroke-width="1" stroke-dasharray="1 2"/>
<rect x="1074" y="133" width="10" height="1" fill="#000" />
<rect x="1855" y="133" width="10" height="1" fill="#000" />
<line x1="1086" y1="133.5" x2="1854" y2="133.5" stroke="#000" stroke-width="1" stroke-dasharray="1 2"/>
<rect x="1074" y="128" width="20" height="1" fill="#000" />
<rect x="1845" y="128" width="20" height="1" fill="#000" />
<line x1="1095" y1="128.5" x2="1844" y2="128.5" stroke="#000" stroke-width="1" stroke-dasharray="1 2"/>
</g><text x="1055.4" y="137.1" text-anchor="end" font-family="'Liberation Sans', sans-serif" font-weight="bold" font-size="18.8" fill="#000">10</text><text x="1068.7" y="128" text-anchor="end" font-family="'Liberation Sans', sans-serif" font-weight="bold" font-size="12.2" fill="#000"><tspan font-weight="normal" font-size="11.5">–</tspan>1</text><g shape-rendering="crispEdges">
</g>
<g shape-rendering="crispEdges">
<rect x="1074" y="104" width="791" height="1" fill="#000" />
<rect x="1074" y="445" width="791" height="1" fill="#000" />
<rect x="1074" y="104" width="1" height="342" fill="#000"/>
<rect x="1864" y="104" width="1" height="342" fill="#000"/>
</g>
<clipPath id="cp1"><rect x="1074" y="104" width="791" height="342"/></clipPath>
<g clip-path="url(#cp1)" shape-rendering="crispEdges" fill="none" stroke-linejoin="round">
<polyline points="1074.5,426.6 1084.4,425.0 1094.2,417.7 1104.1,417.7 1114.0,421.0 1123.9,423.7 1133.8,425.8 1143.6,425.3 1153.5,349.9 1163.4,328.9 1173.2,375.8 1183.1,419.3 1193.0,408.0 1202.9,410.5 1212.8,420.2 1222.6,424.2 1232.5,428.2 1242.4,436.3 1252.2,436.3 1262.1,439.5 1272.0,439.5 1281.9,439.8 1291.8,440.7 1301.6,433.9 1311.5,427.1 1321.4,435.5 1331.2,437.4 1341.1,440.8 1351.0,436.3 1360.9,432.9 1370.8,434.4 1380.6,441.5 1390.5,437.1 1400.4,437.9 1410.2,438.4 1420.1,435.8 1430.0,435.5 1439.9,430.2 1449.8,425.0 1459.6,427.4 1469.5,427.4 1479.4,429.4 1489.2,432.3 1499.1,434.4 1509.0,439.5 1518.9,438.2 1528.8,427.1 1538.6,429.8 1548.5,432.6 1558.4,440.3 1568.2,440.8 1578.1,430.6 1588.0,408.4 1597.9,409.7 1607.8,421.3 1617.6,421.3 1627.5,431.0 1637.4,421.4 1647.2,421.4 1657.1,405.2 1667.0,396.0 1676.9,423.4 1686.8,433.1 1696.6,435.5 1706.5,435.2 1716.4,434.7 1726.2,436.8 1736.1,445.5 1746.0,437.9 1755.9,440.0 1765.8,426.9 1775.6,425.3 1785.5,431.8 1795.4,431.5 1805.2,440.0 1815.1,435.8 1825.0,431.9 1834.9,431.9 1844.8,435.2 1854.6,439.8 1864.5,432.6" stroke="#00ff00" stroke-width="2"/>
<polyline points="1074.5,401.6 1084.4,406.1 1094.2,398.0 1104.1,400.8 1114.0,405.1 1123.9,400.8 1133.8,403.2 1143.6,399.2 1153.5,396.4 1163.4,393.2 1173.2,383.8 1183.1,359.6 1193.0,345.1 1202.9,358.0 1212.8,360.7 1222.6,336.7 1232.5,341.5 1242.4,370.9 1252.2,401.9 1262.1,400.0 1272.0,396.7 1281.9,403.5 1291.8,406.9 1301.6,404.8 1311.5,404.0 1321.4,412.1 1331.2,400.8 1341.1,396.7 1351.0,397.5 1360.9,395.9 1370.8,391.6 1380.6,390.0 1390.5,391.9 1400.4,401.6 1410.2,401.9 1420.1,406.9 1430.0,402.4 1439.9,400.0 1449.8,401.9 1459.6,393.0 1469.5,391.1 1479.4,390.8 1489.2,388.2 1499.1,387.1 1509.0,393.5 1518.9,393.0 1528.8,394.3 1538.6,398.8 1548.5,392.2 1558.4,381.9 1568.2,376.2 1578.1,379.8 1588.0,377.7 1597.9,355.7 1607.8,304.8 1617.6,290.8 1627.5,308.7 1637.4,285.5 1647.2,272.8 1657.1,268.8 1667.0,276.0 1676.9,299.7 1686.8,340.0 1696.6,359.3 1706.5,369.0 1716.4,372.5 1726.2,382.2 1736.1,383.8 1746.0,394.8 1755.9,381.1 1765.8,377.0 1775.6,374.6 1785.5,372.0 1795.4,360.1 1805.2,374.1 1815.1,386.6 1825.0,392.7 1834.9,400.8 1844.8,402.9 1854.6,398.0 1864.5,399.2" stroke="#0000ff" stroke-width="1"/>
<polyline points="1074.5,356.4 1084.4,356.1 1094.2,351.5 1104.1,357.2 1114.0,361.5 1123.9,355.1 1133.8,360.4 1143.6,368.5 1153.5,368.5 1163.4,356.7 1173.2,359.6 1183.1,359.3 1193.0,363.6 1202.9,370.9 1212.8,368.5 1222.6,369.6 1232.5,368.2 1242.4,365.6 1252.2,364.5 1262.1,364.5 1272.0,366.9 1281.9,367.7 1291.8,358.8 1301.6,354.8 1311.5,138.3 1321.4,106.0 1331.2,139.2 1341.1,359.3 1351.0,360.7 1360.9,361.2 1370.8,359.6 1380.6,359.3 1390.5,366.1 1400.4,366.1 1410.2,364.1 1420.1,370.6 1430.0,366.1 1439.9,362.0 1449.8,358.3 1459.6,363.3 1469.5,363.6 1479.4,368.5 1489.2,370.6 1499.1,365.3 1509.0,358.3 1518.9,364.0 1528.8,363.6 1538.6,358.3 1548.5,353.5 1558.4,362.0 1568.2,364.8 1578.1,358.8 1588.0,358.6 1597.9,368.5 1607.8,368.5 1617.6,366.4 1627.5,366.4 1637.4,341.5 1647.2,341.5 1657.1,364.1 1667.0,369.0 1676.9,364.1 1686.8,358.3 1696.6,366.6 1706.5,364.9 1716.4,367.2 1726.2,367.4 1736.1,367.4 1746.0,364.0 1755.9,366.1 1765.8,373.0 1775.6,359.6 1785.5,355.6 1795.4,355.6 1805.2,366.1 1815.1,366.4 1825.0,360.7 1834.9,365.6 1844.8,358.5 1854.6,358.5 1864.5,370.1" stroke="#ff0000" stroke-width="2"/>
</g>
<rect x="1321" y="101" width="1" height="17" fill="#ff0000" shape-rendering="crispEdges"/>
<text x="1074.5" y="463.2" text-anchor="middle" font-family="'Liberation Sans', sans-serif" font-weight="bold" font-size="18.8" fill="#000">10</text>
<text x="1153.5" y="463.2" text-anchor="middle" font-family="'Liberation Sans', sans-serif" font-weight="bold" font-size="18.8" fill="#000">11</text>
<text x="1232.5" y="463.2" text-anchor="middle" font-family="'Liberation Sans', sans-serif" font-weight="bold" font-size="18.8" fill="#000">12</text>
<text x="1311.5" y="463.2" text-anchor="middle" font-family="'Liberation Sans', sans-serif" font-weight="bold" font-size="18.8" fill="#000">13</text>
<text x="1390.5" y="463.2" text-anchor="middle" font-family="'Liberation Sans', sans-serif" font-weight="bold" font-size="18.8" fill="#000">14</text>
<text x="1469.5" y="463.2" text-anchor="middle" font-family="'Liberation Sans', sans-serif" font-weight="bold" font-size="18.8" fill="#000">15</text>
<text x="1548.5" y="463.2" text-anchor="middle" font-family="'Liberation Sans', sans-serif" font-weight="bold" font-size="18.8" fill="#000">16</text>
<text x="1627.5" y="463.2" text-anchor="middle" font-family="'Liberation Sans', sans-serif" font-weight="bold" font-size="18.8" fill="#000">17</text>
<text x="1706.5" y="463.2" text-anchor="middle" font-family="'Liberation Sans', sans-serif" font-weight="bold" font-size="18.8" fill="#000">18</text>
<text x="1785.5" y="463.2" text-anchor="middle" font-family="'Liberation Sans', sans-serif" font-weight="bold" font-size="18.8" fill="#000">19</text>
<text x="1864.5" y="463.2" text-anchor="middle" font-family="'Liberation Sans', sans-serif" font-weight="bold" font-size="18.8" fill="#000">20</text>
<text x="1468.5" y="495" text-anchor="middle" font-family="'Liberation Sans', sans-serif" font-weight="bold" font-size="19" fill="#000">Frequency (Hz)</text>
<text transform="translate(1016,274.5) rotate(-90)" text-anchor="middle" font-family="'Liberation Sans', sans-serif" font-weight="bold" font-size="20" fill="#000">Magnitude</text>
<text x="1000.3" y="525.5" font-family="'Liberation Sans', sans-serif" font-weight="bold" font-size="18" fill="#000">T0=22/01/2026 02:13:59</text>
<text x="1446.5" y="525.5" text-anchor="middle" font-family="'Liberation Sans', sans-serif" font-weight="bold" font-size="18" fill="#000">Avg=32</text>
<text x="1892" y="525.5" text-anchor="end" font-family="'Liberation Sans', sans-serif" font-weight="bold" font-size="18" fill="#000">BW=0.1875</text>
<g shape-rendering="crispEdges">
<rect x="1587" y="119" width="262" height="62" fill="#000"/>
<rect x="1582.5" y="113.5" width="263" height="64" fill="#fff" stroke="#000"/>
<rect x="1591" y="123" width="47" height="2" fill="#ff0000"/>
<rect x="1591" y="145" width="47" height="1" fill="#0000ff"/>
<rect x="1591" y="166" width="47" height="2" fill="#00ff00"/>
</g>
<text x="1648.5" y="128.6" font-family="'Liberation Sans', sans-serif" font-weight="bold" font-size="13" fill="#000">K1:VIS-IMMT2_TM_WIT_P_DQ</text>
<text x="1648.5" y="149.6" font-family="'Liberation Sans', sans-serif" font-weight="bold" font-size="13" fill="#000">K1:VIS-PR3_TM_WIT_P_DQ</text>
<text x="1648.5" y="171.6" font-family="'Liberation Sans', sans-serif" font-weight="bold" font-size="13" fill="#000">K1:VIS-BS_TM_WIT_P_DQ</text>
<rect x="25" y="539" width="932" height="1" fill="#8c8c8c" />
<rect x="25" y="539" width="1" height="476" fill="#8c8c8c"/>
<rect x="26" y="540" width="930" height="475" fill="#fff"/>
<rect x="7" y="539" width="16" height="15" fill="#e8e8e8"/>
<rect x="7" y="539" width="16" height="1" fill="#fff" />
<rect x="7" y="539" width="1" height="15" fill="#fff"/>
<rect x="7" y="553" width="16" height="1" fill="#8c8c8c" />
<rect x="22" y="539" width="1" height="15" fill="#8c8c8c"/>
<path d="M12.5 542 L17.3 545.7 L12.5 549.5Z" fill="#000"/>
<rect x="7" y="556" width="16" height="15" fill="#e8e8e8"/>
<rect x="7" y="556" width="16" height="1" fill="#fff" />
<rect x="7" y="556" width="1" height="15" fill="#fff"/>
<rect x="7" y="570" width="16" height="1" fill="#8c8c8c" />
<rect x="22" y="556" width="1" height="15" fill="#8c8c8c"/>
<path d="M10.5 565 L14.5 560.5 L18.5 565Z" fill="#000"/>
<g shape-rendering="crispEdges"><rect x="33" y="545" width="354" height="23" fill="#000"/>
<rect x="35.5" y="542.5" width="355" height="24" fill="#f4f4f4" stroke="#000" stroke-width="1"/></g>
<text x="211.7" y="560.7" text-anchor="middle" font-family="'Liberation Sans', sans-serif" font-weight="bold" font-size="19.3" fill="#000">Transfer function</text>
<g shape-rendering="crispEdges">
<line x1="197.5" y1="600" x2="197.5" y2="916" stroke="#000" stroke-width="1" stroke-dasharray="1 2"/>
<line x1="276.5" y1="600" x2="276.5" y2="916" stroke="#000" stroke-width="1" stroke-dasharray="1 2"/>
<line x1="355.5" y1="600" x2="355.5" y2="916" stroke="#000" stroke-width="1" stroke-dasharray="1 2"/>
<line x1="434.5" y1="600" x2="434.5" y2="916" stroke="#000" stroke-width="1" stroke-dasharray="1 2"/>
<line x1="513.5" y1="600" x2="513.5" y2="916" stroke="#000" stroke-width="1" stroke-dasharray="1 2"/>
<line x1="592.5" y1="600" x2="592.5" y2="916" stroke="#000" stroke-width="1" stroke-dasharray="1 2"/>
<line x1="671.5" y1="600" x2="671.5" y2="916" stroke="#000" stroke-width="1" stroke-dasharray="1 2"/>
<line x1="750.5" y1="600" x2="750.5" y2="916" stroke="#000" stroke-width="1" stroke-dasharray="1 2"/>
<line x1="829.5" y1="600" x2="829.5" y2="916" stroke="#000" stroke-width="1" stroke-dasharray="1 2"/>
<rect x="134" y="587" width="1" height="6" fill="#000"/>
<rect x="134" y="923" width="1" height="6" fill="#000"/>
<rect x="150" y="587" width="1" height="6" fill="#000"/>
<rect x="150" y="923" width="1" height="6" fill="#000"/>
<rect x="165" y="587" width="1" height="6" fill="#000"/>
<rect x="165" y="923" width="1" height="6" fill="#000"/>
<rect x="181" y="587" width="1" height="6" fill="#000"/>
<rect x="181" y="923" width="1" height="6" fill="#000"/>
<rect x="197" y="587" width="1" height="12" fill="#000"/>
<rect x="197" y="917" width="1" height="12" fill="#000"/>
<rect x="213" y="587" width="1" height="6" fill="#000"/>
<rect x="213" y="923" width="1" height="6" fill="#000"/>
<rect x="229" y="587" width="1" height="6" fill="#000"/>
<rect x="229" y="923" width="1" height="6" fill="#000"/>
<rect x="244" y="587" width="1" height="6" fill="#000"/>
<rect x="244" y="923" width="1" height="6" fill="#000"/>
<rect x="260" y="587" width="1" height="6" fill="#000"/>
<rect x="260" y="923" width="1" height="6" fill="#000"/>
<rect x="276" y="587" width="1" height="12" fill="#000"/>
<rect x="276" y="917" width="1" height="12" fill="#000"/>
<rect x="292" y="587" width="1" height="6" fill="#000"/>
<rect x="292" y="923" width="1" height="6" fill="#000"/>
<rect x="308" y="587" width="1" height="6" fill="#000"/>
<rect x="308" y="923" width="1" height="6" fill="#000"/>
<rect x="323" y="587" width="1" height="6" fill="#000"/>
<rect x="323" y="923" width="1" height="6" fill="#000"/>
<rect x="339" y="587" width="1" height="6" fill="#000"/>
<rect x="339" y="923" width="1" height="6" fill="#000"/>
<rect x="355" y="587" width="1" height="12" fill="#000"/>
<rect x="355" y="917" width="1" height="12" fill="#000"/>
<rect x="371" y="587" width="1" height="6" fill="#000"/>
<rect x="371" y="923" width="1" height="6" fill="#000"/>
<rect x="387" y="587" width="1" height="6" fill="#000"/>
<rect x="387" y="923" width="1" height="6" fill="#000"/>
<rect x="402" y="587" width="1" height="6" fill="#000"/>
<rect x="402" y="923" width="1" height="6" fill="#000"/>
<rect x="418" y="587" width="1" height="6" fill="#000"/>
<rect x="418" y="923" width="1" height="6" fill="#000"/>
<rect x="434" y="587" width="1" height="12" fill="#000"/>
<rect x="434" y="917" width="1" height="12" fill="#000"/>
<rect x="450" y="587" width="1" height="6" fill="#000"/>
<rect x="450" y="923" width="1" height="6" fill="#000"/>
<rect x="466" y="587" width="1" height="6" fill="#000"/>
<rect x="466" y="923" width="1" height="6" fill="#000"/>
<rect x="481" y="587" width="1" height="6" fill="#000"/>
<rect x="481" y="923" width="1" height="6" fill="#000"/>
<rect x="497" y="587" width="1" height="6" fill="#000"/>
<rect x="497" y="923" width="1" height="6" fill="#000"/>
<rect x="513" y="587" width="1" height="12" fill="#000"/>
<rect x="513" y="917" width="1" height="12" fill="#000"/>
<rect x="529" y="587" width="1" height="6" fill="#000"/>
<rect x="529" y="923" width="1" height="6" fill="#000"/>
<rect x="545" y="587" width="1" height="6" fill="#000"/>
<rect x="545" y="923" width="1" height="6" fill="#000"/>
<rect x="560" y="587" width="1" height="6" fill="#000"/>
<rect x="560" y="923" width="1" height="6" fill="#000"/>
<rect x="576" y="587" width="1" height="6" fill="#000"/>
<rect x="576" y="923" width="1" height="6" fill="#000"/>
<rect x="592" y="587" width="1" height="12" fill="#000"/>
<rect x="592" y="917" width="1" height="12" fill="#000"/>
<rect x="608" y="587" width="1" height="6" fill="#000"/>
<rect x="608" y="923" width="1" height="6" fill="#000"/>
<rect x="624" y="587" width="1" height="6" fill="#000"/>
<rect x="624" y="923" width="1" height="6" fill="#000"/>
<rect x="639" y="587" width="1" height="6" fill="#000"/>
<rect x="639" y="923" width="1" height="6" fill="#000"/>
<rect x="655" y="587" width="1" height="6" fill="#000"/>
<rect x="655" y="923" width="1" height="6" fill="#000"/>
<rect x="671" y="587" width="1" height="12" fill="#000"/>
<rect x="671" y="917" width="1" height="12" fill="#000"/>
<rect x="687" y="587" width="1" height="6" fill="#000"/>
<rect x="687" y="923" width="1" height="6" fill="#000"/>
<rect x="703" y="587" width="1" height="6" fill="#000"/>
<rect x="703" y="923" width="1" height="6" fill="#000"/>
<rect x="718" y="587" width="1" height="6" fill="#000"/>
<rect x="718" y="923" width="1" height="6" fill="#000"/>
<rect x="734" y="587" width="1" height="6" fill="#000"/>
<rect x="734" y="923" width="1" height="6" fill="#000"/>
<rect x="750" y="587" width="1" height="12" fill="#000"/>
<rect x="750" y="917" width="1" height="12" fill="#000"/>
<rect x="766" y="587" width="1" height="6" fill="#000"/>
<rect x="766" y="923" width="1" height="6" fill="#000"/>
<rect x="782" y="587" width="1" height="6" fill="#000"/>
<rect x="782" y="923" width="1" height="6" fill="#000"/>
<rect x="797" y="587" width="1" height="6" fill="#000"/>
<rect x="797" y="923" width="1" height="6" fill="#000"/>
<rect x="813" y="587" width="1" height="6" fill="#000"/>
<rect x="813" y="923" width="1" height="6" fill="#000"/>
<rect x="829" y="587" width="1" height="12" fill="#000"/>
<rect x="829" y="917" width="1" height="12" fill="#000"/>
<rect x="845" y="587" width="1" height="6" fill="#000"/>
<rect x="845" y="923" width="1" height="6" fill="#000"/>
<rect x="861" y="587" width="1" height="6" fill="#000"/>
<rect x="861" y="923" width="1" height="6" fill="#000"/>
<rect x="876" y="587" width="1" height="6" fill="#000"/>
<rect x="876" y="923" width="1" height="6" fill="#000"/>
<rect x="892" y="587" width="1" height="6" fill="#000"/>
<rect x="892" y="923" width="1" height="6" fill="#000"/>
<rect x="118" y="928" width="20" height="1" fill="#000" />
<rect x="889" y="928" width="20" height="1" fill="#000" />
<line x1="139" y1="928.5" x2="888" y2="928.5" stroke="#000" stroke-width="1" stroke-dasharray="1 2"/>
</g><text x="114" y="935.2" text-anchor="end" font-family="'Liberation Sans', sans-serif" font-weight="bold" font-size="18.8" fill="#000"><tspan font-weight="normal">–</tspan>40</text><g shape-rendering="crispEdges">
<rect x="118" y="920" width="10" height="1" fill="#000" />
<rect x="899" y="920" width="10" height="1" fill="#000" />
<rect x="118" y="913" width="10" height="1" fill="#000" />
<rect x="899" y="913" width="10" height="1" fill="#000" />
<rect x="118" y="905" width="10" height="1" fill="#000" />
<rect x="899" y="905" width="10" height="1" fill="#000" />
<rect x="118" y="898" width="10" height="1" fill="#000" />
<rect x="899" y="898" width="10" height="1" fill="#000" />
<rect x="118" y="890" width="20" height="1" fill="#000" />
<rect x="889" y="890" width="20" height="1" fill="#000" />
<line x1="139" y1="890.5" x2="888" y2="890.5" stroke="#000" stroke-width="1" stroke-dasharray="1 2"/>
</g><text x="114" y="897.2" text-anchor="end" font-family="'Liberation Sans', sans-serif" font-weight="bold" font-size="18.8" fill="#000"><tspan font-weight="normal">–</tspan>30</text><g shape-rendering="crispEdges">
<rect x="118" y="882" width="10" height="1" fill="#000" />
<rect x="899" y="882" width="10" height="1" fill="#000" />
<rect x="118" y="875" width="10" height="1" fill="#000" />
<rect x="899" y="875" width="10" height="1" fill="#000" />
<rect x="118" y="867" width="10" height="1" fill="#000" />
<rect x="899" y="867" width="10" height="1" fill="#000" />
<rect x="118" y="860" width="10" height="1" fill="#000" />
<rect x="899" y="860" width="10" height="1" fill="#000" />
<rect x="118" y="852" width="20" height="1" fill="#000" />
<rect x="889" y="852" width="20" height="1" fill="#000" />
<line x1="139" y1="852.5" x2="888" y2="852.5" stroke="#000" stroke-width="1" stroke-dasharray="1 2"/>
</g><text x="114" y="859.2" text-anchor="end" font-family="'Liberation Sans', sans-serif" font-weight="bold" font-size="18.8" fill="#000"><tspan font-weight="normal">–</tspan>20</text><g shape-rendering="crispEdges">
<rect x="118" y="844" width="10" height="1" fill="#000" />
<rect x="899" y="844" width="10" height="1" fill="#000" />
<rect x="118" y="837" width="10" height="1" fill="#000" />
<rect x="899" y="837" width="10" height="1" fill="#000" />
<rect x="118" y="829" width="10" height="1" fill="#000" />
<rect x="899" y="829" width="10" height="1" fill="#000" />
<rect x="118" y="822" width="10" height="1" fill="#000" />
<rect x="899" y="822" width="10" height="1" fill="#000" />
<rect x="118" y="814" width="20" height="1" fill="#000" />
<rect x="889" y="814" width="20" height="1" fill="#000" />
<line x1="139" y1="814.5" x2="888" y2="814.5" stroke="#000" stroke-width="1" stroke-dasharray="1 2"/>
</g><text x="114" y="821.2" text-anchor="end" font-family="'Liberation Sans', sans-serif" font-weight="bold" font-size="18.8" fill="#000"><tspan font-weight="normal">–</tspan>10</text><g shape-rendering="crispEdges">
<rect x="118" y="806" width="10" height="1" fill="#000" />
<rect x="899" y="806" width="10" height="1" fill="#000" />
<rect x="118" y="799" width="10" height="1" fill="#000" />
<rect x="899" y="799" width="10" height="1" fill="#000" />
<rect x="118" y="791" width="10" height="1" fill="#000" />
<rect x="899" y="791" width="10" height="1" fill="#000" />
<rect x="118" y="784" width="10" height="1" fill="#000" />
<rect x="899" y="784" width="10" height="1" fill="#000" />
<rect x="118" y="776" width="20" height="1" fill="#000" />
<rect x="889" y="776" width="20" height="1" fill="#000" />
<line x1="139" y1="776.5" x2="888" y2="776.5" stroke="#000" stroke-width="1" stroke-dasharray="1 2"/>
</g><text x="114" y="783.2" text-anchor="end" font-family="'Liberation Sans', sans-serif" font-weight="bold" font-size="18.8" fill="#000">0</text><g shape-rendering="crispEdges">
<rect x="118" y="768" width="10" height="1" fill="#000" />
<rect x="899" y="768" width="10" height="1" fill="#000" />
<rect x="118" y="761" width="10" height="1" fill="#000" />
<rect x="899" y="761" width="10" height="1" fill="#000" />
<rect x="118" y="753" width="10" height="1" fill="#000" />
<rect x="899" y="753" width="10" height="1" fill="#000" />
<rect x="118" y="746" width="10" height="1" fill="#000" />
<rect x="899" y="746" width="10" height="1" fill="#000" />
<rect x="118" y="738" width="20" height="1" fill="#000" />
<rect x="889" y="738" width="20" height="1" fill="#000" />
<line x1="139" y1="738.5" x2="888" y2="738.5" stroke="#000" stroke-width="1" stroke-dasharray="1 2"/>
</g><text x="114" y="745.2" text-anchor="end" font-family="'Liberation Sans', sans-serif" font-weight="bold" font-size="18.8" fill="#000">10</text><g shape-rendering="crispEdges">
<rect x="118" y="730" width="10" height="1" fill="#000" />
<rect x="899" y="730" width="10" height="1" fill="#000" />
<rect x="118" y="723" width="10" height="1" fill="#000" />
<rect x="899" y="723" width="10" height="1" fill="#000" />
<rect x="118" y="715" width="10" height="1" fill="#000" />
<rect x="899" y="715" width="10" height="1" fill="#000" />
<rect x="118" y="708" width="10" height="1" fill="#000" />
<rect x="899" y="708" width="10" height="1" fill="#000" />
<rect x="118" y="700" width="20" height="1" fill="#000" />
<rect x="889" y="700" width="20" height="1" fill="#000" />
<line x1="139" y1="700.5" x2="888" y2="700.5" stroke="#000" stroke-width="1" stroke-dasharray="1 2"/>
</g><text x="114" y="707.2" text-anchor="end" font-family="'Liberation Sans', sans-serif" font-weight="bold" font-size="18.8" fill="#000">20</text><g shape-rendering="crispEdges">
<rect x="118" y="692" width="10" height="1" fill="#000" />
<rect x="899" y="692" width="10" height="1" fill="#000" />
<rect x="118" y="685" width="10" height="1" fill="#000" />
<rect x="899" y="685" width="10" height="1" fill="#000" />
<rect x="118" y="677" width="10" height="1" fill="#000" />
<rect x="899" y="677" width="10" height="1" fill="#000" />
<rect x="118" y="670" width="10" height="1" fill="#000" />
<rect x="899" y="670" width="10" height="1" fill="#000" />
<rect x="118" y="662" width="20" height="1" fill="#000" />
<rect x="889" y="662" width="20" height="1" fill="#000" />
<line x1="139" y1="662.5" x2="888" y2="662.5" stroke="#000" stroke-width="1" stroke-dasharray="1 2"/>
</g><text x="114" y="669.2" text-anchor="end" font-family="'Liberation Sans', sans-serif" font-weight="bold" font-size="18.8" fill="#000">30</text><g shape-rendering="crispEdges">
<rect x="118" y="654" width="10" height="1" fill="#000" />
<rect x="899" y="654" width="10" height="1" fill="#000" />
<rect x="118" y="647" width="10" height="1" fill="#000" />
<rect x="899" y="647" width="10" height="1" fill="#000" />
<rect x="118" y="639" width="10" height="1" fill="#000" />
<rect x="899" y="639" width="10" height="1" fill="#000" />
<rect x="118" y="632" width="10" height="1" fill="#000" />
<rect x="899" y="632" width="10" height="1" fill="#000" />
<rect x="118" y="624" width="20" height="1" fill="#000" />
<rect x="889" y="624" width="20" height="1" fill="#000" />
<line x1="139" y1="624.5" x2="888" y2="624.5" stroke="#000" stroke-width="1" stroke-dasharray="1 2"/>
</g><text x="114" y="631.2" text-anchor="end" font-family="'Liberation Sans', sans-serif" font-weight="bold" font-size="18.8" fill="#000">40</text><g shape-rendering="crispEdges">
<rect x="118" y="616" width="10" height="1" fill="#000" />
<rect x="899" y="616" width="10" height="1" fill="#000" />
<rect x="118" y="609" width="10" height="1" fill="#000" />
<rect x="899" y="609" width="10" height="1" fill="#000" />
<rect x="118" y="601" width="10" height="1" fill="#000" />
<rect x="899" y="601" width="10" height="1" fill="#000" />
<rect x="118" y="594" width="10" height="1" fill="#000" />
<rect x="899" y="594" width="10" height="1" fill="#000" />
</g>
<g shape-rendering="crispEdges">
<rect x="118" y="587" width="791" height="1" fill="#000" />
<rect x="118" y="928" width="791" height="1" fill="#000" />
<rect x="118" y="587" width="1" height="342" fill="#000"/>
<rect x="908" y="587" width="1" height="342" fill="#000"/>
</g>
<clipPath id="cp2"><rect x="118" y="585" width="791" height="344"/></clipPath>
<g clip-path="url(#cp2)" shape-rendering="crispEdges" fill="none" stroke-linejoin="round">
<polyline points="118.5,781.6 128.4,748.8 138.2,752.9 148.1,738.1 158.0,747.1 167.9,756.8 177.8,794.9 187.6,773.9 197.5,723.3 207.4,730.2 217.2,745.5 227.1,756.8 237.0,768.8 246.9,750.0 256.8,779.0 266.6,750.9 276.5,797.8 286.4,769.7 296.2,750.0 306.1,747.8 316.0,754.3 325.9,780.8 335.8,731.9 345.6,703.4 355.5,752.6 365.4,752.6 375.2,752.6 385.1,727.6 395.0,722.1 404.9,717.0 414.8,803.8 424.6,739.0 434.5,756.0 444.4,765.9 454.2,796.1 464.1,790.1 474.0,770.2 483.9,783.3 493.8,794.9 503.6,787.9 513.5,787.9 523.4,773.9 533.2,792.7 543.1,825.7 553.0,804.3 562.9,871.3 572.8,802.1 582.6,848.2 592.5,873.8 602.4,805.9 612.2,826.0 622.1,813.2 632.0,821.7 641.9,795.6 651.8,811.0 661.6,836.9 671.5,795.7 681.4,818.7 691.2,817.8 701.1,835.8 711.0,801.0 720.9,811.0 730.8,866.5 740.6,818.1 750.5,824.7 760.4,860.5 770.2,821.9 780.1,802.9 790.0,835.7 799.9,833.2 809.8,778.2 819.6,791.1 829.5,803.8 839.4,799.1 849.2,860.8 859.1,836.1 869.0,927.2 878.9,802.9 888.8,808.6 898.6,813.7 908.5,808.6" stroke="#87665a" stroke-width="1"/>
<polyline points="118.5,651.6 128.4,669.5 138.2,688.3 148.1,664.4 158.0,678.1 167.9,659.3 177.8,687.5 187.6,688.7 197.5,664.4 207.4,655.0 217.2,700.3 227.1,704.5 237.0,679.8 246.9,686.6 256.8,694.8 266.6,683.2 276.5,691.7 286.4,696.9 296.2,668.7 306.1,667.8 316.0,721.6 325.9,664.4 335.8,676.4 345.6,619.2 355.5,587.5 365.4,587.5 375.2,587.5 385.1,659.3 395.0,644.8 404.9,666.5 414.8,664.4 424.6,662.4 434.5,702.8 444.4,688.3 454.2,673.8 464.1,688.3 474.0,698.2 483.9,735.3 493.8,738.7 503.6,709.2 513.5,709.2 523.4,716.5 533.2,725.0 543.1,732.4 553.0,706.3 562.9,727.6 572.8,761.1 582.6,735.3 592.5,723.0 602.4,724.7 612.2,752.5 622.1,726.2 632.0,732.4 641.9,735.3 651.8,709.7 661.6,719.1 671.5,754.0 681.4,678.9 691.2,681.5 701.1,757.0 711.0,748.8 720.9,733.6 730.8,725.9 740.6,726.7 750.5,726.7 760.4,740.3 770.2,734.4 780.1,716.5 790.0,741.7 799.9,725.0 809.8,725.0 819.6,743.9 829.5,727.6 839.4,773.5 849.2,749.5 859.1,737.5 869.0,778.2 878.9,731.0 888.8,751.6 898.6,760.6 908.5,724.2" stroke="#00ff00" stroke-width="3"/>
<polyline points="118.5,777.3 128.4,766.8 138.2,767.6 148.1,761.1 158.0,767.9 167.9,785.0 177.8,759.4 187.6,785.0 197.5,727.9 207.4,727.9 217.2,795.6 227.1,787.6 237.0,804.7 246.9,772.7 256.8,775.6 266.6,764.2 276.5,827.7 286.4,795.3 296.2,764.2 306.1,769.7 316.0,759.9 325.9,764.2 335.8,814.9 345.6,738.7 355.5,717.7 365.4,717.7 375.2,717.7 385.1,738.7 395.0,753.4 404.9,748.8 414.8,788.4 424.6,803.8 434.5,820.0 444.4,797.3 454.2,808.6 464.1,776.8 474.0,803.5 483.9,795.3 493.8,804.7 503.6,843.1 513.5,814.1 523.4,801.8 533.2,789.3 543.1,802.6 553.0,806.9 562.9,812.3 572.8,824.3 582.6,828.6 592.5,833.7 602.4,829.1 612.2,861.9 622.1,803.8 632.0,889.2 641.9,814.9 651.8,834.5 661.6,855.0 671.5,865.8 681.4,796.6 691.2,796.6 701.1,804.8 711.0,803.8 720.9,855.1 730.8,819.0 740.6,822.8 750.5,816.2 760.4,848.5 770.2,850.5 780.1,833.2 790.0,849.5 799.9,844.5 809.8,815.2 819.6,820.9 829.5,838.9 839.4,843.3 849.2,850.9 859.1,843.3 869.0,851.7 878.9,833.2 888.8,816.2 898.6,838.9 908.5,851.7" stroke="#0000ff" stroke-width="1"/>
<polyline points="118.5,686.6 128.4,677.2 138.2,694.8 148.1,693.5 158.0,701.6 167.9,681.5 177.8,725.0 187.6,701.1 197.5,713.1 207.4,711.9 217.2,713.9 227.1,696.0 237.0,677.2 246.9,690.9 256.8,690.9 266.6,693.8 276.5,719.1 286.4,684.1 296.2,664.9 306.1,730.2 316.0,667.0 325.9,681.5 335.8,713.1 345.6,672.5 355.5,629.9 365.4,629.9 375.2,629.9 385.1,667.8 395.0,647.3 404.9,678.1 414.8,700.6 424.6,702.8 434.5,705.4 444.4,731.9 454.2,677.2 464.1,729.7 474.0,729.7 483.9,717.7 493.8,731.0 503.6,713.1 513.5,719.4 523.4,690.0 533.2,731.0 543.1,711.4 553.0,728.5 562.9,788.4 572.8,719.1 582.6,754.3 592.5,717.7 602.4,718.7 612.2,757.4 622.1,737.8 632.0,762.0 641.9,740.1 651.8,746.7 661.6,762.9 671.5,740.5 681.4,701.1 691.2,704.5 701.1,767.5 711.0,735.3 720.9,761.1 730.8,765.5 740.6,739.2 750.5,749.3 760.4,762.1 770.2,789.6 780.1,820.0 790.0,796.2 799.9,772.5 809.8,757.3 819.6,780.7 829.5,769.7 839.4,761.1 849.2,780.7 859.1,764.0 869.0,754.1 878.9,753.0 888.8,802.3 898.6,781.4 908.5,786.7" stroke="#ff0000" stroke-width="1"/>
</g>
<rect x="365" y="575" width="1" height="25" fill="#00ff00" shape-rendering="crispEdges"/>
<text x="118.5" y="946.2" text-anchor="middle" font-family="'Liberation Sans', sans-serif" font-weight="bold" font-size="18.8" fill="#000">10</text>
<text x="197.5" y="946.2" text-anchor="middle" font-family="'Liberation Sans', sans-serif" font-weight="bold" font-size="18.8" fill="#000">11</text>
<text x="276.5" y="946.2" text-anchor="middle" font-family="'Liberation Sans', sans-serif" font-weight="bold" font-size="18.8" fill="#000">12</text>
<text x="355.5" y="946.2" text-anchor="middle" font-family="'Liberation Sans', sans-serif" font-weight="bold" font-size="18.8" fill="#000">13</text>
<text x="434.5" y="946.2" text-anchor="middle" font-family="'Liberation Sans', sans-serif" font-weight="bold" font-size="18.8" fill="#000">14</text>
<text x="513.5" y="946.2" text-anchor="middle" font-family="'Liberation Sans', sans-serif" font-weight="bold" font-size="18.8" fill="#000">15</text>
<text x="592.5" y="946.2" text-anchor="middle" font-family="'Liberation Sans', sans-serif" font-weight="bold" font-size="18.8" fill="#000">16</text>
<text x="671.5" y="946.2" text-anchor="middle" font-family="'Liberation Sans', sans-serif" font-weight="bold" font-size="18.8" fill="#000">17</text>
<text x="750.5" y="946.2" text-anchor="middle" font-family="'Liberation Sans', sans-serif" font-weight="bold" font-size="18.8" fill="#000">18</text>
<text x="829.5" y="946.2" text-anchor="middle" font-family="'Liberation Sans', sans-serif" font-weight="bold" font-size="18.8" fill="#000">19</text>
<text x="908.5" y="946.2" text-anchor="middle" font-family="'Liberation Sans', sans-serif" font-weight="bold" font-size="18.8" fill="#000">20</text>
<text x="512.5" y="978" text-anchor="middle" font-family="'Liberation Sans', sans-serif" font-weight="bold" font-size="19" fill="#000">Frequency (Hz)</text>
<text transform="translate(60,757.5) rotate(-90)" text-anchor="middle" font-family="'Liberation Sans', sans-serif" font-weight="bold" font-size="20" fill="#000">Magnitude (dB)</text>
<text x="44.3" y="1008.5" font-family="'Liberation Sans', sans-serif" font-weight="bold" font-size="18" fill="#000">T0=22/01/2026 02:13:59</text>
<text x="490.5" y="1008.5" text-anchor="middle" font-family="'Liberation Sans', sans-serif" font-weight="bold" font-size="18" fill="#000">Avg=32</text>
<text x="936" y="1008.5" text-anchor="end" font-family="'Liberation Sans', sans-serif" font-weight="bold" font-size="18" fill="#000">BW=0.1875</text>
<g shape-rendering="crispEdges">
<rect x="142" y="841" width="664" height="82" fill="#000"/>
<rect x="137.5" y="835.5" width="665" height="84" fill="#fff" stroke="#000"/>
<rect x="162" y="845" width="117" height="1" fill="#ff0000"/>
<rect x="162" y="866" width="117" height="1" fill="#0000ff"/>
<rect x="162" y="886" width="117" height="3" fill="#00ff00"/>
<rect x="162" y="908" width="117" height="1" fill="#87665a"/>
</g>
<text x="303.5" y="849.6" font-family="'Liberation Sans', sans-serif" font-weight="bold" font-size="13" fill="#000">K1:ASC-REFL_QPDA1_RF17_I_PIT_OUT_DQ / K1:VIS-IMMT2_TM_WIT_P_DQ</text>
<text x="303.5" y="870.6" font-family="'Liberation Sans', sans-serif" font-weight="bold" font-size="13" fill="#000">K1:ASC-REFL_QPDA1_RF17_Q_PIT_OUT_DQ / K1:VIS-IMMT2_TM_WIT_P_DQ</text>
<text x="303.5" y="891.6" font-family="'Liberation Sans', sans-serif" font-weight="bold" font-size="13" fill="#000">K1:ASC-REFL_QPDA2_RF17_I_PIT_OUT_DQ / K1:VIS-IMMT2_TM_WIT_P_DQ</text>
<text x="303.5" y="912.6" font-family="'Liberation Sans', sans-serif" font-weight="bold" font-size="13" fill="#000">K1:ASC-REFL_QPDA2_RF17_Q_PIT_OUT_DQ / K1:VIS-IMMT2_TM_WIT_P_DQ</text>
<rect x="981" y="539" width="932" height="1" fill="#8c8c8c" />
<rect x="981" y="539" width="1" height="476" fill="#8c8c8c"/>
<rect x="982" y="540" width="930" height="475" fill="#fff"/>
<rect x="963" y="539" width="16" height="15" fill="#e8e8e8"/>
<rect x="963" y="539" width="16" height="1" fill="#fff" />
<rect x="963" y="539" width="1" height="15" fill="#fff"/>
<rect x="963" y="553" width="16" height="1" fill="#8c8c8c" />
<rect x="978" y="539" width="1" height="15" fill="#8c8c8c"/>
<path d="M968.5 542 L973.3 545.7 L968.5 549.5Z" fill="#000"/>
<rect x="963" y="556" width="16" height="15" fill="#e8e8e8"/>
<rect x="963" y="556" width="16" height="1" fill="#fff" />
<rect x="963" y="556" width="1" height="15" fill="#fff"/>
<rect x="963" y="570" width="16" height="1" fill="#8c8c8c" />
<rect x="978" y="556" width="1" height="15" fill="#8c8c8c"/>
<path d="M966.5 565 L970.5 560.5 L974.5 565Z" fill="#000"/>
<g shape-rendering="crispEdges"><rect x="989" y="545" width="354" height="23" fill="#000"/>
<rect x="991.5" y="542.5" width="355" height="24" fill="#f4f4f4" stroke="#000" stroke-width="1"/></g>
<text x="1167.7" y="560.7" text-anchor="middle" font-family="'Liberation Sans', sans-serif" font-weight="bold" font-size="19.3" fill="#000">Transfer function</text>
<g shape-rendering="crispEdges">
<line x1="1153.5" y1="600" x2="1153.5" y2="916" stroke="#000" stroke-width="1" stroke-dasharray="1 2"/>
<line x1="1232.5" y1="600" x2="1232.5" y2="916" stroke="#000" stroke-width="1" stroke-dasharray="1 2"/>
<line x1="1311.5" y1="600" x2="1311.5" y2="916" stroke="#000" stroke-width="1" stroke-dasharray="1 2"/>
<line x1="1390.5" y1="600" x2="1390.5" y2="916" stroke="#000" stroke-width="1" stroke-dasharray="1 2"/>
<line x1="1469.5" y1="600" x2="1469.5" y2="916" stroke="#000" stroke-width="1" stroke-dasharray="1 2"/>
<line x1="1548.5" y1="600" x2="1548.5" y2="916" stroke="#000" stroke-width="1" stroke-dasharray="1 2"/>
<line x1="1627.5" y1="600" x2="1627.5" y2="916" stroke="#000" stroke-width="1" stroke-dasharray="1 2"/>
<line x1="1706.5" y1="600" x2="1706.5" y2="916" stroke="#000" stroke-width="1" stroke-dasharray="1 2"/>
<line x1="1785.5" y1="600" x2="1785.5" y2="916" stroke="#000" stroke-width="1" stroke-dasharray="1 2"/>
<rect x="1090" y="587" width="1" height="6" fill="#000"/>
<rect x="1090" y="923" width="1" height="6" fill="#000"/>
<rect x="1106" y="587" width="1" height="6" fill="#000"/>
<rect x="1106" y="923" width="1" height="6" fill="#000"/>
<rect x="1121" y="587" width="1" height="6" fill="#000"/>
<rect x="1121" y="923" width="1" height="6" fill="#000"/>
<rect x="1137" y="587" width="1" height="6" fill="#000"/>
<rect x="1137" y="923" width="1" height="6" fill="#000"/>
<rect x="1153" y="587" width="1" height="12" fill="#000"/>
<rect x="1153" y="917" width="1" height="12" fill="#000"/>
<rect x="1169" y="587" width="1" height="6" fill="#000"/>
<rect x="1169" y="923" width="1" height="6" fill="#000"/>
<rect x="1185" y="587" width="1" height="6" fill="#000"/>
<rect x="1185" y="923" width="1" height="6" fill="#000"/>
<rect x="1200" y="587" width="1" height="6" fill="#000"/>
<rect x="1200" y="923" width="1" height="6" fill="#000"/>
<rect x="1216" y="587" width="1" height="6" fill="#000"/>
<rect x="1216" y="923" width="1" height="6" fill="#000"/>
<rect x="1232" y="587" width="1" height="12" fill="#000"/>
<rect x="1232" y="917" width="1" height="12" fill="#000"/>
<rect x="1248" y="587" width="1" height="6" fill="#000"/>
<rect x="1248" y="923" width="1" height="6" fill="#000"/>
<rect x="1264" y="587" width="1" height="6" fill="#000"/>
<rect x="1264" y="923" width="1" height="6" fill="#000"/>
<rect x="1279" y="587" width="1" height="6" fill="#000"/>
<rect x="1279" y="923" width="1" height="6" fill="#000"/>
<rect x="1295" y="587" width="1" height="6" fill="#000"/>
<rect x="1295" y="923" width="1" height="6" fill="#000"/>
<rect x="1311" y="587" width="1" height="12" fill="#000"/>
<rect x="1311" y="917" width="1" height="12" fill="#000"/>
<rect x="1327" y="587" width="1" height="6" fill="#000"/>
<rect x="1327" y="923" width="1" height="6" fill="#000"/>
<rect x="1343" y="587" width="1" height="6" fill="#000"/>
<rect x="1343" y="923" width="1" height="6" fill="#000"/>
<rect x="1358" y="587" width="1" height="6" fill="#000"/>
<rect x="1358" y="923" width="1" height="6" fill="#000"/>
<rect x="1374" y="587" width="1" height="6" fill="#000"/>
<rect x="1374" y="923" width="1" height="6" fill="#000"/>
<rect x="1390" y="587" width="1" height="12" fill="#000"/>
<rect x="1390" y="917" width="1" height="12" fill="#000"/>
<rect x="1406" y="587" width="1" height="6" fill="#000"/>
<rect x="1406" y="923" width="1" height="6" fill="#000"/>
<rect x="1422" y="587" width="1" height="6" fill="#000"/>
<rect x="1422" y="923" width="1" height="6" fill="#000"/>
<rect x="1437" y="587" width="1" height="6" fill="#000"/>
<rect x="1437" y="923" width="1" height="6" fill="#000"/>
<rect x="1453" y="587" width="1" height="6" fill="#000"/>
<rect x="1453" y="923" width="1" height="6" fill="#000"/>
<rect x="1469" y="587" width="1" height="12" fill="#000"/>
<rect x="1469" y="917" width="1" height="12" fill="#000"/>
<rect x="1485" y="587" width="1" height="6" fill="#000"/>
<rect x="1485" y="923" width="1" height="6" fill="#000"/>
<rect x="1501" y="587" width="1" height="6" fill="#000"/>
<rect x="1501" y="923" width="1" height="6" fill="#000"/>
<rect x="1516" y="587" width="1" height="6" fill="#000"/>
<rect x="1516" y="923" width="1" height="6" fill="#000"/>
<rect x="1532" y="587" width="1" height="6" fill="#000"/>
<rect x="1532" y="923" width="1" height="6" fill="#000"/>
<rect x="1548" y="587" width="1" height="12" fill="#000"/>
<rect x="1548" y="917" width="1" height="12" fill="#000"/>
<rect x="1564" y="587" width="1" height="6" fill="#000"/>
<rect x="1564" y="923" width="1" height="6" fill="#000"/>
<rect x="1580" y="587" width="1" height="6" fill="#000"/>
<rect x="1580" y="923" width="1" height="6" fill="#000"/>
<rect x="1595" y="587" width="1" height="6" fill="#000"/>
<rect x="1595" y="923" width="1" height="6" fill="#000"/>
<rect x="1611" y="587" width="1" height="6" fill="#000"/>
<rect x="1611" y="923" width="1" height="6" fill="#000"/>
<rect x="1627" y="587" width="1" height="12" fill="#000"/>
<rect x="1627" y="917" width="1" height="12" fill="#000"/>
<rect x="1643" y="587" width="1" height="6" fill="#000"/>
<rect x="1643" y="923" width="1" height="6" fill="#000"/>
<rect x="1659" y="587" width="1" height="6" fill="#000"/>
<rect x="1659" y="923" width="1" height="6" fill="#000"/>
<rect x="1674" y="587" width="1" height="6" fill="#000"/>
<rect x="1674" y="923" width="1" height="6" fill="#000"/>
<rect x="1690" y="587" width="1" height="6" fill="#000"/>
<rect x="1690" y="923" width="1" height="6" fill="#000"/>
<rect x="1706" y="587" width="1" height="12" fill="#000"/>
<rect x="1706" y="917" width="1" height="12" fill="#000"/>
<rect x="1722" y="587" width="1" height="6" fill="#000"/>
<rect x="1722" y="923" width="1" height="6" fill="#000"/>
<rect x="1738" y="587" width="1" height="6" fill="#000"/>
<rect x="1738" y="923" width="1" height="6" fill="#000"/>
<rect x="1753" y="587" width="1" height="6" fill="#000"/>
<rect x="1753" y="923" width="1" height="6" fill="#000"/>
<rect x="1769" y="587" width="1" height="6" fill="#000"/>
<rect x="1769" y="923" width="1" height="6" fill="#000"/>
<rect x="1785" y="587" width="1" height="12" fill="#000"/>
<rect x="1785" y="917" width="1" height="12" fill="#000"/>
<rect x="1801" y="587" width="1" height="6" fill="#000"/>
<rect x="1801" y="923" width="1" height="6" fill="#000"/>
<rect x="1817" y="587" width="1" height="6" fill="#000"/>
<rect x="1817" y="923" width="1" height="6" fill="#000"/>
<rect x="1832" y="587" width="1" height="6" fill="#000"/>
<rect x="1832" y="923" width="1" height="6" fill="#000"/>
<rect x="1848" y="587" width="1" height="6" fill="#000"/>
<rect x="1848" y="923" width="1" height="6" fill="#000"/>
<rect x="1074" y="928" width="10" height="1" fill="#000" />
<rect x="1855" y="928" width="10" height="1" fill="#000" />
<rect x="1074" y="915" width="10" height="1" fill="#000" />
<rect x="1855" y="915" width="10" height="1" fill="#000" />
<rect x="1074" y="902" width="10" height="1" fill="#000" />
<rect x="1855" y="902" width="10" height="1" fill="#000" />
<rect x="1074" y="890" width="10" height="1" fill="#000" />
<rect x="1855" y="890" width="10" height="1" fill="#000" />
<rect x="1074" y="877" width="20" height="1" fill="#000" />
<rect x="1845" y="877" width="20" height="1" fill="#000" />
<line x1="1095" y1="877.5" x2="1844" y2="877.5" stroke="#000" stroke-width="1" stroke-dasharray="1 2"/>
</g><text x="1070" y="884.2" text-anchor="end" font-family="'Liberation Sans', sans-serif" font-weight="bold" font-size="18.8" fill="#000">0</text><g shape-rendering="crispEdges">
<rect x="1074" y="864" width="10" height="1" fill="#000" />
<rect x="1855" y="864" width="10" height="1" fill="#000" />
<rect x="1074" y="852" width="10" height="1" fill="#000" />
<rect x="1855" y="852" width="10" height="1" fill="#000" />
<rect x="1074" y="839" width="10" height="1" fill="#000" />
<rect x="1855" y="839" width="10" height="1" fill="#000" />
<rect x="1074" y="827" width="10" height="1" fill="#000" />
<rect x="1855" y="827" width="10" height="1" fill="#000" />
<rect x="1074" y="814" width="20" height="1" fill="#000" />
<rect x="1845" y="814" width="20" height="1" fill="#000" />
<line x1="1095" y1="814.5" x2="1844" y2="814.5" stroke="#000" stroke-width="1" stroke-dasharray="1 2"/>
</g><text x="1070" y="821.2" text-anchor="end" font-family="'Liberation Sans', sans-serif" font-weight="bold" font-size="18.8" fill="#000">10</text><g shape-rendering="crispEdges">
<rect x="1074" y="801" width="10" height="1" fill="#000" />
<rect x="1855" y="801" width="10" height="1" fill="#000" />
<rect x="1074" y="789" width="10" height="1" fill="#000" />
<rect x="1855" y="789" width="10" height="1" fill="#000" />
<rect x="1074" y="776" width="10" height="1" fill="#000" />
<rect x="1855" y="776" width="10" height="1" fill="#000" />
<rect x="1074" y="763" width="10" height="1" fill="#000" />
<rect x="1855" y="763" width="10" height="1" fill="#000" />
<rect x="1074" y="751" width="20" height="1" fill="#000" />
<rect x="1845" y="751" width="20" height="1" fill="#000" />
<line x1="1095" y1="751.5" x2="1844" y2="751.5" stroke="#000" stroke-width="1" stroke-dasharray="1 2"/>
</g><text x="1070" y="758.2" text-anchor="end" font-family="'Liberation Sans', sans-serif" font-weight="bold" font-size="18.8" fill="#000">20</text><g shape-rendering="crispEdges">
<rect x="1074" y="738" width="10" height="1" fill="#000" />
<rect x="1855" y="738" width="10" height="1" fill="#000" />
<rect x="1074" y="725" width="10" height="1" fill="#000" />
<rect x="1855" y="725" width="10" height="1" fill="#000" />
<rect x="1074" y="713" width="10" height="1" fill="#000" />
<rect x="1855" y="713" width="10" height="1" fill="#000" />
<rect x="1074" y="700" width="10" height="1" fill="#000" />
<rect x="1855" y="700" width="10" height="1" fill="#000" />
<rect x="1074" y="688" width="20" height="1" fill="#000" />
<rect x="1845" y="688" width="20" height="1" fill="#000" />
<line x1="1095" y1="688.5" x2="1844" y2="688.5" stroke="#000" stroke-width="1" stroke-dasharray="1 2"/>
</g><text x="1070" y="695.2" text-anchor="end" font-family="'Liberation Sans', sans-serif" font-weight="bold" font-size="18.8" fill="#000">30</text><g shape-rendering="crispEdges">
<rect x="1074" y="675" width="10" height="1" fill="#000" />
<rect x="1855" y="675" width="10" height="1" fill="#000" />
<rect x="1074" y="662" width="10" height="1" fill="#000" />
<rect x="1855" y="662" width="10" height="1" fill="#000" />
<rect x="1074" y="650" width="10" height="1" fill="#000" />
<rect x="1855" y="650" width="10" height="1" fill="#000" />
<rect x="1074" y="637" width="10" height="1" fill="#000" />
<rect x="1855" y="637" width="10" height="1" fill="#000" />
<rect x="1074" y="624" width="20" height="1" fill="#000" />
<rect x="1845" y="624" width="20" height="1" fill="#000" />
<line x1="1095" y1="624.5" x2="1844" y2="624.5" stroke="#000" stroke-width="1" stroke-dasharray="1 2"/>
</g><text x="1070" y="631.2" text-anchor="end" font-family="'Liberation Sans', sans-serif" font-weight="bold" font-size="18.8" fill="#000">40</text><g shape-rendering="crispEdges">
<rect x="1074" y="612" width="10" height="1" fill="#000" />
<rect x="1855" y="612" width="10" height="1" fill="#000" />
<rect x="1074" y="599" width="10" height="1" fill="#000" />
<rect x="1855" y="599" width="10" height="1" fill="#000" />
</g>
<g shape-rendering="crispEdges">
<rect x="1074" y="587" width="791" height="1" fill="#000" />
<rect x="1074" y="928" width="791" height="1" fill="#000" />
<rect x="1074" y="587" width="1" height="342" fill="#000"/>
<rect x="1864" y="587" width="1" height="342" fill="#000"/>
</g>
<clipPath id="cp3"><rect x="1074" y="587" width="791" height="342"/></clipPath>
<g clip-path="url(#cp3)" shape-rendering="crispEdges" fill="none" stroke-linejoin="round">
<polyline points="1074.5,693.5 1084.4,753.4 1094.2,691.7 1104.1,679.8 1114.0,699.4 1123.9,677.2 1133.8,685.8 1143.6,680.6 1153.5,676.4 1163.4,652.1 1173.2,657.2 1183.1,710.5 1193.0,673.0 1202.9,692.6 1212.8,676.7 1222.6,681.5 1232.5,721.6 1242.4,725.9 1252.2,650.8 1262.1,622.6 1272.0,590.7 1281.9,587.5 1291.8,614.0 1301.6,600.9 1311.5,593.9 1321.4,593.9 1331.2,593.9 1341.1,598.7 1351.0,590.1 1360.9,595.8 1370.8,683.5 1380.6,680.2 1390.5,627.2 1400.4,620.9 1410.2,683.2 1420.1,709.7 1430.0,655.0 1439.9,716.5 1449.8,708.5 1459.6,677.2 1469.5,696.9 1479.4,698.2 1489.2,719.6 1499.1,690.4 1509.0,748.9 1518.9,722.1 1528.8,736.1 1538.6,781.6 1548.5,748.2 1558.4,730.2 1568.2,730.2 1578.1,832.8 1588.0,781.6 1597.9,791.9 1607.8,807.2 1617.6,785.0 1627.5,779.0 1637.4,747.0 1647.2,743.2 1657.1,821.5 1667.0,839.3 1676.9,835.5 1686.8,829.9 1696.6,842.5 1706.5,905.5 1716.4,797.8 1726.2,786.1 1736.1,797.8 1746.0,830.2 1755.9,793.8 1765.8,817.6 1775.6,882.5 1785.5,830.2 1795.4,927.6 1805.2,833.9 1815.1,847.4 1825.0,828.4 1834.9,838.4 1844.8,844.7 1854.6,819.4 1864.5,797.8" stroke="#87665a" stroke-width="1"/>
<polyline points="1074.5,781.6 1084.4,705.4 1094.2,733.6 1104.1,691.4 1114.0,720.8 1123.9,705.4 1133.8,723.3 1143.6,696.9 1153.5,660.7 1163.4,641.0 1173.2,671.6 1183.1,684.6 1193.0,681.8 1202.9,707.1 1212.8,722.5 1222.6,671.3 1232.5,705.4 1242.4,652.5 1252.2,645.1 1262.1,691.7 1272.0,615.2 1281.9,642.2 1291.8,623.4 1301.6,696.9 1311.5,640.0 1321.4,640.0 1331.2,640.0 1341.1,673.0 1351.0,616.6 1360.9,606.7 1370.8,643.9 1380.6,701.4 1390.5,703.7 1400.4,716.5 1410.2,683.2 1420.1,775.6 1430.0,655.9 1439.9,730.2 1449.8,749.5 1459.6,723.0 1469.5,728.5 1479.4,695.5 1489.2,709.7 1499.1,700.3 1509.0,751.7 1518.9,822.6 1528.8,780.8 1538.6,741.8 1548.5,758.6 1558.4,786.4 1568.2,775.6 1578.1,785.9 1588.0,845.1 1597.9,766.2 1607.8,795.3 1617.6,761.1 1627.5,832.7 1637.4,777.0 1647.2,787.3 1657.1,837.5 1667.0,823.9 1676.9,839.5 1686.8,827.5 1696.6,842.5 1706.5,845.5 1716.4,845.5 1726.2,845.5 1736.1,845.5 1746.0,845.5 1755.9,842.5 1765.8,825.7 1775.6,843.8 1785.5,823.0 1795.4,849.2 1805.2,813.1 1815.1,861.8 1825.0,814.9 1834.9,838.4 1844.8,839.6 1854.6,838.9 1864.5,850.1" stroke="#00ff00" stroke-width="1"/>
<polyline points="1074.5,703.7 1084.4,730.2 1094.2,773.9 1104.1,720.8 1114.0,771.4 1123.9,697.2 1133.8,717.7 1143.6,729.7 1153.5,727.6 1163.4,789.3 1173.2,709.7 1183.1,696.5 1193.0,730.2 1202.9,734.4 1212.8,700.3 1222.6,709.7 1232.5,696.9 1242.4,687.5 1252.2,661.0 1262.1,680.6 1272.0,672.6 1281.9,667.8 1291.8,619.2 1301.6,621.2 1311.5,646.8 1321.4,646.8 1331.2,646.8 1341.1,591.3 1351.0,597.3 1360.9,662.1 1370.8,664.8 1380.6,669.5 1390.5,656.4 1400.4,681.5 1410.2,671.3 1420.1,663.6 1430.0,705.7 1439.9,706.8 1449.8,714.8 1459.6,722.5 1469.5,709.2 1479.4,721.6 1489.2,778.2 1499.1,767.9 1509.0,734.4 1518.9,769.7 1528.8,698.6 1538.6,739.7 1548.5,780.8 1558.4,747.3 1568.2,732.4 1578.1,750.7 1588.0,806.4 1597.9,799.5 1607.8,770.2 1617.6,810.6 1627.5,763.6 1637.4,768.7 1647.2,778.9 1657.1,805.2 1667.0,853.5 1676.9,836.5 1686.8,793.3 1696.6,815.8 1706.5,838.5 1716.4,850.5 1726.2,848.5 1736.1,819.8 1746.0,825.7 1755.9,817.5 1765.8,868.1 1775.6,839.3 1785.5,840.2 1795.4,814.9 1805.2,859.1 1815.1,820.9 1825.0,842.0 1834.9,813.1 1844.8,833.0 1854.6,802.8 1864.5,826.6" stroke="#0000ff" stroke-width="1"/>
<polyline points="1074.5,730.2 1084.4,724.2 1094.2,805.5 1104.1,734.4 1114.0,791.9 1123.9,737.0 1133.8,728.5 1143.6,799.5 1153.5,720.8 1163.4,726.7 1173.2,831.1 1183.1,719.1 1193.0,820.0 1202.9,716.5 1212.8,788.5 1222.6,698.6 1232.5,725.7 1242.4,756.8 1252.2,762.5 1262.1,741.5 1272.0,664.1 1281.9,662.4 1291.8,732.7 1301.6,647.3 1311.5,757.7 1321.4,756.3 1331.2,757.7 1341.1,652.5 1351.0,640.1 1360.9,671.3 1370.8,724.2 1380.6,741.8 1390.5,705.4 1400.4,682.4 1410.2,720.8 1420.1,731.9 1430.0,771.4 1439.9,806.4 1449.8,763.7 1459.6,774.8 1469.5,757.7 1479.4,711.4 1489.2,779.9 1499.1,768.8 1509.0,740.1 1518.9,766.2 1528.8,776.1 1538.6,769.3 1548.5,779.6 1558.4,890.5 1568.2,824.3 1578.1,900.5 1588.0,791.0 1597.9,795.3 1607.8,797.8 1617.6,821.7 1627.5,825.0 1637.4,844.5 1647.2,837.0 1657.1,808.7 1667.0,807.3 1676.9,824.8 1686.8,846.5 1696.6,824.8 1706.5,832.9 1716.4,829.9 1726.2,857.5 1736.1,860.5 1746.0,836.5 1755.9,805.0 1765.8,909.6 1775.6,839.3 1785.5,865.4 1795.4,835.7 1805.2,824.8 1815.1,799.6 1825.0,863.6 1834.9,871.7 1844.8,845.6 1854.6,852.4 1864.5,824.8" stroke="#ff0000" stroke-width="3"/>
</g>
<rect x="1321" y="743" width="1" height="25" fill="#ff0000" shape-rendering="crispEdges"/>
<text x="1074.5" y="946.2" text-anchor="middle" font-family="'Liberation Sans', sans-serif" font-weight="bold" font-size="18.8" fill="#000">10</text>
<text x="1153.5" y="946.2" text-anchor="middle" font-family="'Liberation Sans', sans-serif" font-weight="bold" font-size="18.8" fill="#000">11</text>
<text x="1232.5" y="946.2" text-anchor="middle" font-family="'Liberation Sans', sans-serif" font-weight="bold" font-size="18.8" fill="#000">12</text>
<text x="1311.5" y="946.2" text-anchor="middle" font-family="'Liberation Sans', sans-serif" font-weight="bold" font-size="18.8" fill="#000">13</text>
<text x="1390.5" y="946.2" text-anchor="middle" font-family="'Liberation Sans', sans-serif" font-weight="bold" font-size="18.8" fill="#000">14</text>
<text x="1469.5" y="946.2" text-anchor="middle" font-family="'Liberation Sans', sans-serif" font-weight="bold" font-size="18.8" fill="#000">15</text>
<text x="1548.5" y="946.2" text-anchor="middle" font-family="'Liberation Sans', sans-serif" font-weight="bold" font-size="18.8" fill="#000">16</text>
<text x="1627.5" y="946.2" text-anchor="middle" font-family="'Liberation Sans', sans-serif" font-weight="bold" font-size="18.8" fill="#000">17</text>
<text x="1706.5" y="946.2" text-anchor="middle" font-family="'Liberation Sans', sans-serif" font-weight="bold" font-size="18.8" fill="#000">18</text>
<text x="1785.5" y="946.2" text-anchor="middle" font-family="'Liberation Sans', sans-serif" font-weight="bold" font-size="18.8" fill="#000">19</text>
<text x="1864.5" y="946.2" text-anchor="middle" font-family="'Liberation Sans', sans-serif" font-weight="bold" font-size="18.8" fill="#000">20</text>
<text x="1468.5" y="978" text-anchor="middle" font-family="'Liberation Sans', sans-serif" font-weight="bold" font-size="19" fill="#000">Frequency (Hz)</text>
<text transform="translate(1016,757.5) rotate(-90)" text-anchor="middle" font-family="'Liberation Sans', sans-serif" font-weight="bold" font-size="20" fill="#000">Magnitude (dB)</text>
<text x="1000.3" y="1008.5" font-family="'Liberation Sans', sans-serif" font-weight="bold" font-size="18" fill="#000">T0=22/01/2026 02:13:59</text>
<text x="1446.5" y="1008.5" text-anchor="middle" font-family="'Liberation Sans', sans-serif" font-weight="bold" font-size="18" fill="#000">Avg=32</text>
<text x="1892" y="1008.5" text-anchor="end" font-family="'Liberation Sans', sans-serif" font-weight="bold" font-size="18" fill="#000">BW=0.1875</text>
<g shape-rendering="crispEdges">
<rect x="1098" y="841" width="665" height="82" fill="#000"/>
<rect x="1093.5" y="835.5" width="666" height="84" fill="#fff" stroke="#000"/>
<rect x="1118" y="844" width="117" height="3" fill="#ff0000"/>
<rect x="1118" y="866" width="117" height="1" fill="#0000ff"/>
<rect x="1118" y="887" width="117" height="1" fill="#00ff00"/>
<rect x="1118" y="908" width="117" height="1" fill="#87665a"/>
</g>
<text x="1259.8" y="849.6" font-family="'Liberation Sans', sans-serif" font-weight="bold" font-size="13" fill="#000">K1:ASC-REFL_QPDA1_RF45_I_PIT_OUT_DQ / K1:VIS-IMMT2_TM_WIT_P_DQ</text>
<text x="1259.8" y="870.6" font-family="'Liberation Sans', sans-serif" font-weight="bold" font-size="13" fill="#000">K1:ASC-REFL_QPDA1_RF45_Q_PIT_OUT_DQ / K1:VIS-IMMT2_TM_WIT_P_DQ</text>
<text x="1259.8" y="891.6" font-family="'Liberation Sans', sans-serif" font-weight="bold" font-size="13" fill="#000">K1:ASC-REFL_QPDA2_RF45_I_PIT_OUT_DQ / K1:VIS-IMMT2_TM_WIT_P_DQ</text>
<text x="1259.8" y="912.6" font-family="'Liberation Sans', sans-serif" font-weight="bold" font-size="13" fill="#000">K1:ASC-REFL_QPDA2_RF45_Q_PIT_OUT_DQ / K1:VIS-IMMT2_TM_WIT_P_DQ</text>
<rect x="5" y="1021" width="173" height="25" fill="#e8e8e8"/>
<rect x="5" y="1021" width="173" height="1" fill="#fff" />
<rect x="5" y="1021" width="1" height="25" fill="#fff"/>
<rect x="5" y="1045" width="173" height="1" fill="#8c8c8c" />
<rect x="177" y="1021" width="1" height="25" fill="#8c8c8c"/>
<text x="91.5" y="1035.6" text-anchor="middle" font-family="'Liberation Sans', sans-serif" font-size="12" fill="#000">Reset</text>
<rect x="178" y="1021" width="173" height="25" fill="#e8e8e8"/>
<rect x="178" y="1021" width="173" height="1" fill="#fff" />
<rect x="178" y="1021" width="1" height="25" fill="#fff"/>
<rect x="178" y="1045" width="173" height="1" fill="#8c8c8c" />
<rect x="350" y="1021" width="1" height="25" fill="#8c8c8c"/>
<text x="264.5" y="1035.6" text-anchor="middle" font-family="'Liberation Sans', sans-serif" font-size="12" fill="#000">Zoom</text>
<rect x="351" y="1021" width="173" height="25" fill="#e8e8e8"/>
<rect x="351" y="1021" width="173" height="1" fill="#fff" />
<rect x="351" y="1021" width="1" height="25" fill="#fff"/>
<rect x="351" y="1045" width="173" height="1" fill="#8c8c8c" />
<rect x="523" y="1021" width="1" height="25" fill="#8c8c8c"/>
<text x="437.5" y="1035.6" text-anchor="middle" font-family="'Liberation Sans', sans-serif" font-size="12" fill="#000">Active</text>
<rect x="524" y="1021" width="173" height="25" fill="#e8e8e8"/>
<rect x="524" y="1021" width="173" height="1" fill="#fff" />
<rect x="524" y="1021" width="1" height="25" fill="#fff"/>
<rect x="524" y="1045" width="173" height="1" fill="#8c8c8c" />
<rect x="696" y="1021" width="1" height="25" fill="#8c8c8c"/>
<text x="610.5" y="1035.6" text-anchor="middle" font-family="'Liberation Sans', sans-serif" font-size="12" fill="#000">New</text>
<rect x="697" y="1021" width="173" height="25" fill="#e8e8e8"/>
<rect x="697" y="1021" width="173" height="1" fill="#fff" />
<rect x="697" y="1021" width="1" height="25" fill="#fff"/>
<rect x="697" y="1045" width="173" height="1" fill="#8c8c8c" />
<rect x="869" y="1021" width="1" height="25" fill="#8c8c8c"/>
<text x="783.5" y="1035.6" text-anchor="middle" font-family="'Liberation Sans', sans-serif" font-size="12" fill="#000">Options...</text>
<rect x="870" y="1021" width="173" height="25" fill="#e8e8e8"/>
<rect x="870" y="1021" width="173" height="1" fill="#fff" />
<rect x="870" y="1021" width="1" height="25" fill="#fff"/>
<rect x="870" y="1045" width="173" height="1" fill="#8c8c8c" />
<rect x="1042" y="1021" width="1" height="25" fill="#8c8c8c"/>
<text x="956.5" y="1035.6" text-anchor="middle" font-family="'Liberation Sans', sans-serif" font-size="12" fill="#000">Import...</text>
<rect x="1043" y="1021" width="173" height="25" fill="#e8e8e8"/>
<rect x="1043" y="1021" width="173" height="1" fill="#fff" />
<rect x="1043" y="1021" width="1" height="25" fill="#fff"/>
<rect x="1043" y="1045" width="173" height="1" fill="#8c8c8c" />
<rect x="1215" y="1021" width="1" height="25" fill="#8c8c8c"/>
<text x="1129.5" y="1035.6" text-anchor="middle" font-family="'Liberation Sans', sans-serif" font-size="12" fill="#000">Export...</text>
<rect x="1216" y="1021" width="173" height="25" fill="#e8e8e8"/>
<rect x="1216" y="1021" width="173" height="1" fill="#fff" />
<rect x="1216" y="1021" width="1" height="25" fill="#fff"/>
<rect x="1216" y="1045" width="173" height="1" fill="#8c8c8c" />
<rect x="1388" y="1021" width="1" height="25" fill="#8c8c8c"/>
<text x="1302.5" y="1035.6" text-anchor="middle" font-family="'Liberation Sans', sans-serif" font-size="12" fill="#000">Reference...</text>
<rect x="1389" y="1021" width="173" height="25" fill="#e8e8e8"/>
<rect x="1389" y="1021" width="173" height="1" fill="#fff" />
<rect x="1389" y="1021" width="1" height="25" fill="#fff"/>
<rect x="1389" y="1045" width="173" height="1" fill="#8c8c8c" />
<rect x="1561" y="1021" width="1" height="25" fill="#8c8c8c"/>
<text x="1475.5" y="1035.6" text-anchor="middle" font-family="'Liberation Sans', sans-serif" font-size="12" fill="#000">Calibration...</text>
<rect x="1562" y="1021" width="173" height="25" fill="#e8e8e8"/>
<rect x="1562" y="1021" width="173" height="1" fill="#fff" />
<rect x="1562" y="1021" width="1" height="25" fill="#fff"/>
<rect x="1562" y="1045" width="173" height="1" fill="#8c8c8c" />
<rect x="1734" y="1021" width="1" height="25" fill="#8c8c8c"/>
<text x="1648.5" y="1035.6" text-anchor="middle" font-family="'Liberation Sans', sans-serif" font-size="12" fill="#000">Print...</text>
<rect x="1735" y="1021" width="173" height="25" fill="#e8e8e8"/>
<rect x="1735" y="1021" width="173" height="1" fill="#fff" />
<rect x="1735" y="1021" width="1" height="25" fill="#fff"/>
<rect x="1735" y="1045" width="173" height="1" fill="#8c8c8c" />
<rect x="1907" y="1021" width="1" height="25" fill="#8c8c8c"/>
<text x="1821.5" y="1035.6" text-anchor="middle" font-family="'Liberation Sans', sans-serif" font-size="12" fill="#000">Exit</text>
</svg>
</body></html>
